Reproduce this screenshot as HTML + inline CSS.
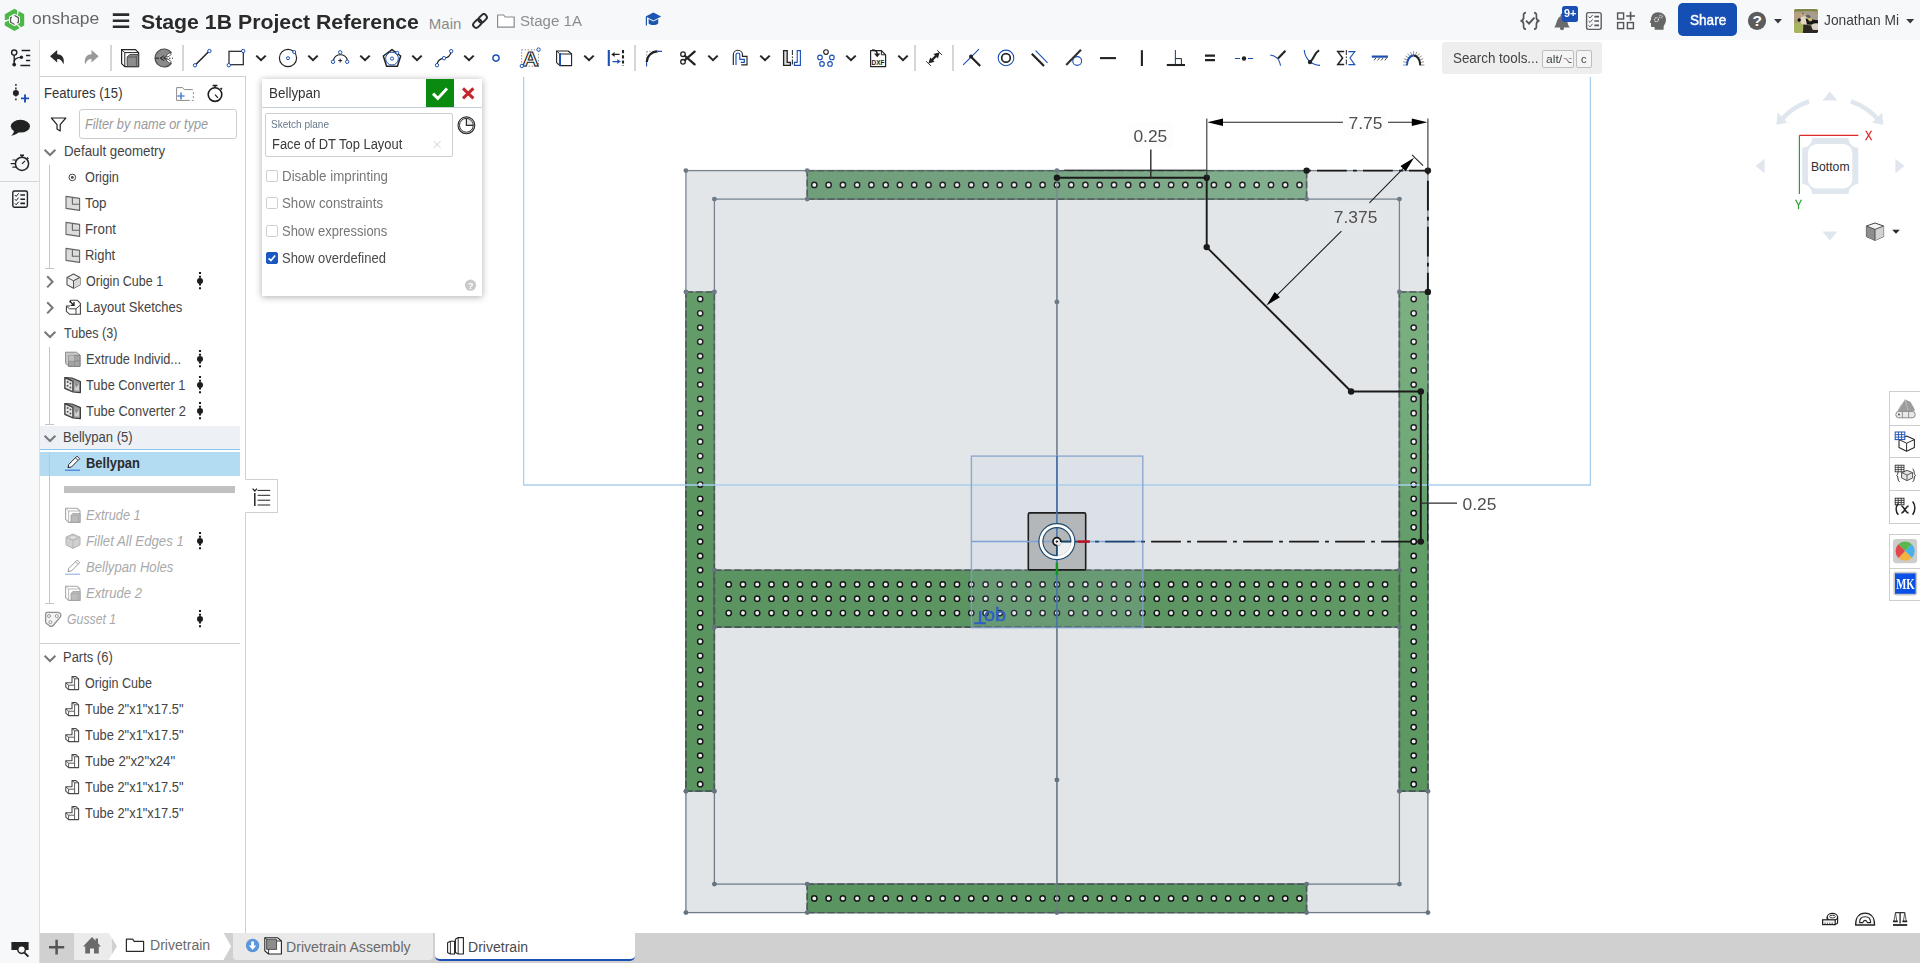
<!DOCTYPE html>
<html lang="en"><head><meta charset="utf-8"><title>Stage 1B Project Reference | Drivetrain</title>
<style>
*{box-sizing:border-box}
html,body{margin:0;padding:0}
body{width:1920px;height:963px;overflow:hidden;position:relative;background:#fff;font-family:"Liberation Sans",sans-serif;}
.t{position:absolute;white-space:nowrap;line-height:1;transform-origin:0 50%;display:inline-block}
.ic,.cv{position:absolute;overflow:visible;display:block}
.cv{left:0;top:0;will-change:transform}
#header{position:absolute;left:0;top:0;width:1920px;height:40px;background:#f7f8fa}
#sidebar{position:absolute;left:0;top:40px;width:40px;height:923px;background:#f7f8fa;border-right:1px solid #dcdcdc}
#sidebar .hr{position:absolute;left:0;top:141px;width:39px;height:1px;background:#d6d6d6}
#toolbar{position:absolute;left:40px;top:40px;width:1880px;height:37px;background:#fff}
.tsep{position:absolute;top:45px;width:1.6px;height:25.5px;background:#d6d6d6}
#search{position:absolute;left:1442.3px;top:41.9px;width:159.6px;height:31.8px;background:#eeeeee;border-radius:3px}
.key{position:absolute;top:50.3px;height:18.2px;background:#f5f5f5;border:1px solid #bdbdbd;border-bottom-width:1.6px;border-radius:2px}
#features{position:absolute;left:40px;top:76px;width:206px;height:857px;background:#fff;border-top:1px solid #cfcfcf;border-right:1px solid #cfcfcf}
#filter{position:absolute;left:79px;top:109px;width:158px;height:30px;border:1px solid #cdcdcd;border-radius:3px;background:#fff}
.row{position:absolute;left:40px;width:200px;height:24px}
.guide{position:absolute;width:1px;background:#c4c4c4}
.gtick{position:absolute;height:1px;background:#c4c4c4}
#rollbar{position:absolute;left:64.1px;top:486.1px;width:171px;height:6.8px;background:#c1c1c1}
#ftab{position:absolute;left:245px;top:479.2px;width:33.2px;height:33.6px;background:#fff;border:1px solid #cfcfcf;border-left:1px solid #fff}
#dialog{position:absolute;left:262px;top:79px;width:220px;height:217px;background:#fff;box-shadow:0 1px 7px rgba(0,0,0,0.33)}
#dialog .hd{position:absolute;left:0;top:0;width:220px;height:28.6px;border-bottom:1px solid #c4cfd8}
#ok{position:absolute;left:426px;top:79px;width:28px;height:28.2px;background:#0b8a10}
#plane{position:absolute;left:265px;top:113px;width:188px;height:44px;border:1px solid #cfcfcf;border-radius:2px;background:#fff}
.cb{position:absolute;left:266px;width:12px;height:12px;border:1px solid #cfcfcf;border-radius:2px;background:#fff}
.cb.on{background:#1a56c4;border-color:#1a56c4}
#tabs{position:absolute;left:40px;top:932.5px;width:1880px;height:30.5px;background:#d0d0d0}
#home{position:absolute;left:73.9px;top:932.5px;width:38px;height:27.4px;background:#ebebeb}
#asm{position:absolute;left:232.8px;top:932.5px;width:200.4px;height:27.2px;background:#e9e9e9;border-radius:0 0 4px 4px}
#active{position:absolute;left:434.8px;top:932.5px;width:200.4px;height:28.6px;background:#fff;border-bottom:2px solid #1a4fb4;border-radius:0 0 5px 5px}
#share{position:absolute;left:1678px;top:2.9px;width:59px;height:32.9px;background:#164fb3;border-radius:5px}
#badge{position:absolute;left:1561.9px;top:6px;width:16.2px;height:15.8px;background:#1a4fb4;border-radius:2.5px}
#avatar{position:absolute;left:1793px;top:7.9px;width:26px;height:26px;border-radius:3px;background:#fff}
.rp{position:absolute;left:1888.5px;width:32px;background:#fff;border:1px solid #cdcdcd;border-right:none}
.rp i{position:absolute;left:0;width:31px;height:1px;background:#cdcdcd}
</style></head><body>
<main id="canvas">
<svg class="cv" width="1920" height="963" viewBox="0 0 1920 963">
<defs>
<circle id="h" r="2.65" fill="#eceef2" stroke="#141414" stroke-width="1.45"/>
<circle id="gp" r="2.45" fill="#65737f"/>
<circle id="bp" r="3.2" fill="#1a1a1a"/>
<linearGradient id="gt" x1="0" y1="0" x2="1" y2="0"><stop offset="0" stop-color="#679972"/><stop offset="0.5" stop-color="#6f9f7c"/><stop offset="1" stop-color="#7dac89"/></linearGradient>
<linearGradient id="gr" x1="0" y1="0" x2="0" y2="1"><stop offset="0" stop-color="#74ac7a"/><stop offset="0.38" stop-color="#67a26e"/><stop offset="0.6" stop-color="#5f9b65"/><stop offset="1" stop-color="#5c9762"/></linearGradient>
<linearGradient id="gm" x1="0" y1="0" x2="1" y2="0"><stop offset="0" stop-color="#5b9461"/><stop offset="0.6" stop-color="#5c9562"/><stop offset="1" stop-color="#609964"/></linearGradient>
</defs>
<rect x="685.9" y="170.6" width="742.0" height="742.0" fill="#e2e5e8" stroke="#6f7c88" stroke-width="1.3"/>
<rect x="714.4" y="199.1" width="685.0" height="685.0" fill="#e2e5e8" stroke="#6f7c88" stroke-width="1.3"/>
<line x1="1056.9" y1="170.6" x2="1056.9" y2="912.6" stroke="#6f7c88" stroke-width="1.4"/>
<rect x="807.2" y="170.6" width="499.4" height="28.5" fill="url(#gt)"/>
<rect x="807.2" y="170.6" width="499.4" height="28.5" fill="none" stroke="#222b2c" stroke-width="1.4" stroke-dasharray="7 3"/>
<rect x="807.2" y="170.6" width="499.4" height="28.5" fill="none" stroke="#566b66" stroke-width="1.4" stroke-opacity="0.75"/>
<rect x="807.2" y="884.1" width="499.4" height="28.5" fill="#5a9460"/>
<rect x="807.2" y="884.1" width="499.4" height="28.5" fill="none" stroke="#222b2c" stroke-width="1.4" stroke-dasharray="7 3"/>
<rect x="807.2" y="884.1" width="499.4" height="28.5" fill="none" stroke="#566b66" stroke-width="1.4" stroke-opacity="0.75"/>
<rect x="685.9" y="291.9" width="28.5" height="499.4" fill="#5a9560"/>
<rect x="685.9" y="291.9" width="28.5" height="499.4" fill="none" stroke="#222b2c" stroke-width="1.4" stroke-dasharray="7 3"/>
<rect x="685.9" y="291.9" width="28.5" height="499.4" fill="none" stroke="#566b66" stroke-width="1.4" stroke-opacity="0.75"/>
<rect x="1399.4" y="291.9" width="28.5" height="499.4" fill="url(#gr)"/>
<rect x="1399.4" y="291.9" width="28.5" height="499.4" fill="none" stroke="#222b2c" stroke-width="1.4" stroke-dasharray="7 3"/>
<rect x="1399.4" y="291.9" width="28.5" height="499.4" fill="none" stroke="#566b66" stroke-width="1.4" stroke-opacity="0.75"/>
<rect x="714.4" y="570.1" width="685.0" height="57.1" fill="url(#gm)"/>
<rect x="714.4" y="570.1" width="685.0" height="57.1" fill="none" stroke="#222b2c" stroke-width="1.4" stroke-dasharray="7 3"/>
<rect x="714.4" y="570.1" width="685.0" height="57.1" fill="none" stroke="#566b66" stroke-width="1.4" stroke-opacity="0.75"/>
<g><use href="#h" x="814.3" y="184.9"/><use href="#h" x="828.6" y="184.9"/><use href="#h" x="842.9" y="184.9"/><use href="#h" x="857.1" y="184.9"/><use href="#h" x="871.4" y="184.9"/><use href="#h" x="885.7" y="184.9"/><use href="#h" x="899.9" y="184.9"/><use href="#h" x="914.2" y="184.9"/><use href="#h" x="928.5" y="184.9"/><use href="#h" x="942.7" y="184.9"/><use href="#h" x="957.0" y="184.9"/><use href="#h" x="971.3" y="184.9"/><use href="#h" x="985.6" y="184.9"/><use href="#h" x="999.8" y="184.9"/><use href="#h" x="1014.1" y="184.9"/><use href="#h" x="1028.4" y="184.9"/><use href="#h" x="1042.6" y="184.9"/><use href="#h" x="1056.9" y="184.9"/><use href="#h" x="1071.2" y="184.9"/><use href="#h" x="1085.4" y="184.9"/><use href="#h" x="1099.7" y="184.9"/><use href="#h" x="1114.0" y="184.9"/><use href="#h" x="1128.2" y="184.9"/><use href="#h" x="1142.5" y="184.9"/><use href="#h" x="1156.8" y="184.9"/><use href="#h" x="1171.1" y="184.9"/><use href="#h" x="1185.3" y="184.9"/><use href="#h" x="1199.6" y="184.9"/><use href="#h" x="1213.9" y="184.9"/><use href="#h" x="1228.1" y="184.9"/><use href="#h" x="1242.4" y="184.9"/><use href="#h" x="1256.7" y="184.9"/><use href="#h" x="1271.0" y="184.9"/><use href="#h" x="1285.2" y="184.9"/><use href="#h" x="1299.5" y="184.9"/></g>
<g><use href="#h" x="814.3" y="898.4"/><use href="#h" x="828.6" y="898.4"/><use href="#h" x="842.9" y="898.4"/><use href="#h" x="857.1" y="898.4"/><use href="#h" x="871.4" y="898.4"/><use href="#h" x="885.7" y="898.4"/><use href="#h" x="899.9" y="898.4"/><use href="#h" x="914.2" y="898.4"/><use href="#h" x="928.5" y="898.4"/><use href="#h" x="942.7" y="898.4"/><use href="#h" x="957.0" y="898.4"/><use href="#h" x="971.3" y="898.4"/><use href="#h" x="985.6" y="898.4"/><use href="#h" x="999.8" y="898.4"/><use href="#h" x="1014.1" y="898.4"/><use href="#h" x="1028.4" y="898.4"/><use href="#h" x="1042.6" y="898.4"/><use href="#h" x="1056.9" y="898.4"/><use href="#h" x="1071.2" y="898.4"/><use href="#h" x="1085.4" y="898.4"/><use href="#h" x="1099.7" y="898.4"/><use href="#h" x="1114.0" y="898.4"/><use href="#h" x="1128.2" y="898.4"/><use href="#h" x="1142.5" y="898.4"/><use href="#h" x="1156.8" y="898.4"/><use href="#h" x="1171.1" y="898.4"/><use href="#h" x="1185.3" y="898.4"/><use href="#h" x="1199.6" y="898.4"/><use href="#h" x="1213.9" y="898.4"/><use href="#h" x="1228.1" y="898.4"/><use href="#h" x="1242.4" y="898.4"/><use href="#h" x="1256.7" y="898.4"/><use href="#h" x="1271.0" y="898.4"/><use href="#h" x="1285.2" y="898.4"/><use href="#h" x="1299.5" y="898.4"/></g>
<g><use href="#h" x="700.2" y="299.0"/><use href="#h" x="700.2" y="313.3"/><use href="#h" x="700.2" y="327.6"/><use href="#h" x="700.2" y="341.8"/><use href="#h" x="700.2" y="356.1"/><use href="#h" x="700.2" y="370.4"/><use href="#h" x="700.2" y="384.6"/><use href="#h" x="700.2" y="398.9"/><use href="#h" x="700.2" y="413.2"/><use href="#h" x="700.2" y="427.4"/><use href="#h" x="700.2" y="441.7"/><use href="#h" x="700.2" y="456.0"/><use href="#h" x="700.2" y="470.2"/><use href="#h" x="700.2" y="484.5"/><use href="#h" x="700.2" y="498.8"/><use href="#h" x="700.2" y="513.1"/><use href="#h" x="700.2" y="527.3"/><use href="#h" x="700.2" y="541.6"/><use href="#h" x="700.2" y="555.9"/><use href="#h" x="700.2" y="570.1"/><use href="#h" x="700.2" y="584.4"/><use href="#h" x="700.2" y="598.7"/><use href="#h" x="700.2" y="613.0"/><use href="#h" x="700.2" y="627.2"/><use href="#h" x="700.2" y="641.5"/><use href="#h" x="700.2" y="655.8"/><use href="#h" x="700.2" y="670.0"/><use href="#h" x="700.2" y="684.3"/><use href="#h" x="700.2" y="698.6"/><use href="#h" x="700.2" y="712.8"/><use href="#h" x="700.2" y="727.1"/><use href="#h" x="700.2" y="741.4"/><use href="#h" x="700.2" y="755.6"/><use href="#h" x="700.2" y="769.9"/><use href="#h" x="700.2" y="784.2"/></g>
<g><use href="#h" x="1413.7" y="299.0"/><use href="#h" x="1413.7" y="313.3"/><use href="#h" x="1413.7" y="327.6"/><use href="#h" x="1413.7" y="341.8"/><use href="#h" x="1413.7" y="356.1"/><use href="#h" x="1413.7" y="370.4"/><use href="#h" x="1413.7" y="384.6"/><use href="#h" x="1413.7" y="398.9"/><use href="#h" x="1413.7" y="413.2"/><use href="#h" x="1413.7" y="427.4"/><use href="#h" x="1413.7" y="441.7"/><use href="#h" x="1413.7" y="456.0"/><use href="#h" x="1413.7" y="470.2"/><use href="#h" x="1413.7" y="484.5"/><use href="#h" x="1413.7" y="498.8"/><use href="#h" x="1413.7" y="513.1"/><use href="#h" x="1413.7" y="527.3"/><use href="#h" x="1413.7" y="541.6"/><use href="#h" x="1413.7" y="555.9"/><use href="#h" x="1413.7" y="570.1"/><use href="#h" x="1413.7" y="584.4"/><use href="#h" x="1413.7" y="598.7"/><use href="#h" x="1413.7" y="613.0"/><use href="#h" x="1413.7" y="627.2"/><use href="#h" x="1413.7" y="641.5"/><use href="#h" x="1413.7" y="655.8"/><use href="#h" x="1413.7" y="670.0"/><use href="#h" x="1413.7" y="684.3"/><use href="#h" x="1413.7" y="698.6"/><use href="#h" x="1413.7" y="712.8"/><use href="#h" x="1413.7" y="727.1"/><use href="#h" x="1413.7" y="741.4"/><use href="#h" x="1413.7" y="755.6"/><use href="#h" x="1413.7" y="769.9"/><use href="#h" x="1413.7" y="784.2"/></g>
<g><use href="#h" x="728.7" y="584.4"/><use href="#h" x="743.0" y="584.4"/><use href="#h" x="757.2" y="584.4"/><use href="#h" x="771.5" y="584.4"/><use href="#h" x="785.8" y="584.4"/><use href="#h" x="800.0" y="584.4"/><use href="#h" x="814.3" y="584.4"/><use href="#h" x="828.6" y="584.4"/><use href="#h" x="842.9" y="584.4"/><use href="#h" x="857.1" y="584.4"/><use href="#h" x="871.4" y="584.4"/><use href="#h" x="885.7" y="584.4"/><use href="#h" x="899.9" y="584.4"/><use href="#h" x="914.2" y="584.4"/><use href="#h" x="928.5" y="584.4"/><use href="#h" x="942.7" y="584.4"/><use href="#h" x="957.0" y="584.4"/><use href="#h" x="971.3" y="584.4"/><use href="#h" x="985.6" y="584.4"/><use href="#h" x="999.8" y="584.4"/><use href="#h" x="1014.1" y="584.4"/><use href="#h" x="1028.4" y="584.4"/><use href="#h" x="1042.6" y="584.4"/><use href="#h" x="1056.9" y="584.4"/><use href="#h" x="1071.2" y="584.4"/><use href="#h" x="1085.4" y="584.4"/><use href="#h" x="1099.7" y="584.4"/><use href="#h" x="1114.0" y="584.4"/><use href="#h" x="1128.2" y="584.4"/><use href="#h" x="1142.5" y="584.4"/><use href="#h" x="1156.8" y="584.4"/><use href="#h" x="1171.1" y="584.4"/><use href="#h" x="1185.3" y="584.4"/><use href="#h" x="1199.6" y="584.4"/><use href="#h" x="1213.9" y="584.4"/><use href="#h" x="1228.1" y="584.4"/><use href="#h" x="1242.4" y="584.4"/><use href="#h" x="1256.7" y="584.4"/><use href="#h" x="1271.0" y="584.4"/><use href="#h" x="1285.2" y="584.4"/><use href="#h" x="1299.5" y="584.4"/><use href="#h" x="1313.8" y="584.4"/><use href="#h" x="1328.0" y="584.4"/><use href="#h" x="1342.3" y="584.4"/><use href="#h" x="1356.6" y="584.4"/><use href="#h" x="1370.8" y="584.4"/><use href="#h" x="1385.1" y="584.4"/><use href="#h" x="728.7" y="598.7"/><use href="#h" x="743.0" y="598.7"/><use href="#h" x="757.2" y="598.7"/><use href="#h" x="771.5" y="598.7"/><use href="#h" x="785.8" y="598.7"/><use href="#h" x="800.0" y="598.7"/><use href="#h" x="814.3" y="598.7"/><use href="#h" x="828.6" y="598.7"/><use href="#h" x="842.9" y="598.7"/><use href="#h" x="857.1" y="598.7"/><use href="#h" x="871.4" y="598.7"/><use href="#h" x="885.7" y="598.7"/><use href="#h" x="899.9" y="598.7"/><use href="#h" x="914.2" y="598.7"/><use href="#h" x="928.5" y="598.7"/><use href="#h" x="942.7" y="598.7"/><use href="#h" x="957.0" y="598.7"/><use href="#h" x="971.3" y="598.7"/><use href="#h" x="985.6" y="598.7"/><use href="#h" x="999.8" y="598.7"/><use href="#h" x="1014.1" y="598.7"/><use href="#h" x="1028.4" y="598.7"/><use href="#h" x="1042.6" y="598.7"/><use href="#h" x="1056.9" y="598.7"/><use href="#h" x="1071.2" y="598.7"/><use href="#h" x="1085.4" y="598.7"/><use href="#h" x="1099.7" y="598.7"/><use href="#h" x="1114.0" y="598.7"/><use href="#h" x="1128.2" y="598.7"/><use href="#h" x="1142.5" y="598.7"/><use href="#h" x="1156.8" y="598.7"/><use href="#h" x="1171.1" y="598.7"/><use href="#h" x="1185.3" y="598.7"/><use href="#h" x="1199.6" y="598.7"/><use href="#h" x="1213.9" y="598.7"/><use href="#h" x="1228.1" y="598.7"/><use href="#h" x="1242.4" y="598.7"/><use href="#h" x="1256.7" y="598.7"/><use href="#h" x="1271.0" y="598.7"/><use href="#h" x="1285.2" y="598.7"/><use href="#h" x="1299.5" y="598.7"/><use href="#h" x="1313.8" y="598.7"/><use href="#h" x="1328.0" y="598.7"/><use href="#h" x="1342.3" y="598.7"/><use href="#h" x="1356.6" y="598.7"/><use href="#h" x="1370.8" y="598.7"/><use href="#h" x="1385.1" y="598.7"/><use href="#h" x="728.7" y="613.0"/><use href="#h" x="743.0" y="613.0"/><use href="#h" x="757.2" y="613.0"/><use href="#h" x="771.5" y="613.0"/><use href="#h" x="785.8" y="613.0"/><use href="#h" x="800.0" y="613.0"/><use href="#h" x="814.3" y="613.0"/><use href="#h" x="828.6" y="613.0"/><use href="#h" x="842.9" y="613.0"/><use href="#h" x="857.1" y="613.0"/><use href="#h" x="871.4" y="613.0"/><use href="#h" x="885.7" y="613.0"/><use href="#h" x="899.9" y="613.0"/><use href="#h" x="914.2" y="613.0"/><use href="#h" x="928.5" y="613.0"/><use href="#h" x="942.7" y="613.0"/><use href="#h" x="957.0" y="613.0"/><use href="#h" x="971.3" y="613.0"/><use href="#h" x="985.6" y="613.0"/><use href="#h" x="999.8" y="613.0"/><use href="#h" x="1014.1" y="613.0"/><use href="#h" x="1028.4" y="613.0"/><use href="#h" x="1042.6" y="613.0"/><use href="#h" x="1056.9" y="613.0"/><use href="#h" x="1071.2" y="613.0"/><use href="#h" x="1085.4" y="613.0"/><use href="#h" x="1099.7" y="613.0"/><use href="#h" x="1114.0" y="613.0"/><use href="#h" x="1128.2" y="613.0"/><use href="#h" x="1142.5" y="613.0"/><use href="#h" x="1156.8" y="613.0"/><use href="#h" x="1171.1" y="613.0"/><use href="#h" x="1185.3" y="613.0"/><use href="#h" x="1199.6" y="613.0"/><use href="#h" x="1213.9" y="613.0"/><use href="#h" x="1228.1" y="613.0"/><use href="#h" x="1242.4" y="613.0"/><use href="#h" x="1256.7" y="613.0"/><use href="#h" x="1271.0" y="613.0"/><use href="#h" x="1285.2" y="613.0"/><use href="#h" x="1299.5" y="613.0"/><use href="#h" x="1313.8" y="613.0"/><use href="#h" x="1328.0" y="613.0"/><use href="#h" x="1342.3" y="613.0"/><use href="#h" x="1356.6" y="613.0"/><use href="#h" x="1370.8" y="613.0"/><use href="#h" x="1385.1" y="613.0"/></g>
<line x1="1056.9" y1="170.6" x2="1056.9" y2="912.6" stroke="#6f7c88" stroke-width="1.4" stroke-opacity="0.8"/>
<g><use href="#gp" x="685.9" y="170.6"/><use href="#gp" x="1427.9" y="912.6"/><use href="#gp" x="685.9" y="912.6"/><use href="#gp" x="714.4" y="199.1"/><use href="#gp" x="1399.4" y="199.1"/><use href="#gp" x="714.4" y="884.1"/><use href="#gp" x="1399.4" y="884.1"/><use href="#gp" x="807.2" y="170.6"/><use href="#gp" x="807.2" y="199.1"/><use href="#gp" x="1306.6" y="199.1"/><use href="#gp" x="807.2" y="884.1"/><use href="#gp" x="807.2" y="912.6"/><use href="#gp" x="1306.6" y="884.1"/><use href="#gp" x="1306.6" y="912.6"/><use href="#gp" x="685.9" y="291.9"/><use href="#gp" x="714.4" y="291.9"/><use href="#gp" x="685.9" y="791.3"/><use href="#gp" x="714.4" y="791.3"/><use href="#gp" x="1399.4" y="291.9"/><use href="#gp" x="1399.4" y="791.3"/><use href="#gp" x="1427.9" y="791.3"/><use href="#gp" x="1056.9" y="170.6"/><use href="#gp" x="1056.9" y="912.6"/><use href="#gp" x="1056.9" y="301.9"/><use href="#gp" x="1056.9" y="779.9"/><use href="#gp" x="714.4" y="570.1"/><use href="#gp" x="714.4" y="627.2"/><use href="#gp" x="1399.4" y="570.1"/><use href="#gp" x="1399.4" y="627.2"/></g>
<path d="M523.6 76 V485 H1590.4 V76" fill="#ffffff" fill-opacity="0.06" stroke="#a9d0ee" stroke-width="1.3"/>
<rect x="971.4" y="456.1" width="171.4" height="171.6" fill="#b9c8e6" fill-opacity="0.13"/>
<rect x="1028.3" y="512.9" width="57.4" height="57" fill="#b4b7ba" stroke="#1e1e1e" stroke-width="1.6" rx="1.5"/>
<rect x="971.4" y="456.1" width="171.4" height="171.6" fill="none" stroke="#7f9fcb" stroke-width="1.4" stroke-opacity="0.85"/>
<line x1="1056.9" y1="456.1" x2="1056.9" y2="627.7" stroke="#4272a8" stroke-width="1.5"/>
<line x1="971.4" y1="541.6" x2="1142.8" y2="541.6" stroke="#7da3d6" stroke-width="1.5"/>
<text x="974" y="610.5" font-family="Liberation Sans, sans-serif" font-size="18" fill="#2d5fc2" stroke="#2d5fc2" stroke-width="0.45" transform="translate(0,1221) scale(1,-1)" textLength="32" lengthAdjust="spacingAndGlyphs">Top</text>
<clipPath id="cpA"><rect x="1056" y="530" width="87.6" height="24"/></clipPath><clipPath id="cpB"><rect x="1143.6" y="530" width="300" height="24"/></clipPath>
<line x1="1056.9" y1="541.6" x2="1420.8" y2="541.6" stroke="#1f446f" stroke-width="1.9" stroke-dasharray="29.8 6.2 3.8 6.2" stroke-dashoffset="-2.2" clip-path="url(#cpA)"/>
<line x1="1056.9" y1="541.6" x2="1420.8" y2="541.6" stroke="#1a1a1a" stroke-width="1.9" stroke-dasharray="29.8 6.2 3.8 6.2" stroke-dashoffset="-2.2" clip-path="url(#cpB)"/>
<line x1="1306.6" y1="170.6" x2="1427.9" y2="170.6" stroke="#1a1a1a" stroke-width="1.9" stroke-dasharray="29.8 6.2 3.8 6.2" stroke-dashoffset="35.6"/>
<line x1="1427.9" y1="170.6" x2="1427.9" y2="291.9" stroke="#1a1a1a" stroke-width="1.9" stroke-dasharray="29.8 6.2 3.8 6.2" stroke-dashoffset="35.8"/>
<use href="#h" x="1413.7" y="541.6"/>
<path d="M1064 170.2 H1206.7 M1427.6 391.5 V541.6" stroke="#1e1e1e" stroke-width="1" fill="none"/>
<path d="M1056.9 177.7 L1206.7 177.7 L1206.7 247.1 L1351.1 391.5 L1420.8 391.5 L1420.8 541.6" fill="none" stroke="#1a1a1a" stroke-width="1.9" stroke-linejoin="round"/>
<g><use href="#bp" x="1056.9" y="177.7"/><use href="#bp" x="1206.7" y="177.7"/><use href="#bp" x="1206.7" y="247.1"/><use href="#bp" x="1351.1" y="391.5"/><use href="#bp" x="1420.8" y="391.5"/><use href="#bp" x="1420.8" y="541.6"/><use href="#bp" x="1306.6" y="170.6"/><use href="#bp" x="1427.9" y="170.6"/><use href="#bp" x="1427.9" y="291.9"/></g>
<g transform="translate(1056.9,541.6)">
<circle r="16" fill="none" stroke="#ffffff" stroke-width="3.6"/>
<path d="M0 0 H14 A14 14 0 0 1 0 14 Z" fill="#eef0f2"/>
<circle r="18" fill="none" stroke="#1d4a6d" stroke-width="1.1"/>
<path d="M0 14 A14 14 0 1 1 14 0 H0 Z" fill="none" stroke="#1d4a6d" stroke-width="1.1"/>
<path d="M0 0 V14 M0 0 H14" stroke="#1d4a6d" stroke-width="1.6"/>
<circle r="3.9" fill="#f4f4f4" stroke="#151515" stroke-width="1.7"/>
<circle r="1.2" fill="#151515"/>
<path d="M0.5 0.5 H4.5 A4 4 0 0 1 0.5 4.5 Z" fill="#e8e8e8"/>
<line x1="21" y1="0" x2="33" y2="0" stroke="#c8101c" stroke-width="2.4"/>
<line x1="0" y1="21" x2="0" y2="33.5" stroke="#0c9a18" stroke-width="2.4"/>
</g>
<path d="M1206.8 118.5 V177.7 M1427.9 118.5 V170.6" stroke="#333" stroke-width="1.1" fill="none"/>
<path d="M1222 122.3 H1343 M1388 122.3 H1413" stroke="#222" stroke-width="1.1"/>
<path d="M1207.3 122.3 L1223 118.6 V126 Z M1427.4 122.3 L1411.8 118.6 V126 Z" fill="#000"/>
<rect x="1343" y="110" width="44" height="25" fill="#fdfdfd"/>
<text x="1348.6" y="128.7" font-family="Liberation Sans, sans-serif" font-size="17.4" fill="#4f4f4f">7.75</text>
<rect x="1129" y="122" width="44" height="26" fill="#fdfdfd"/>
<text x="1133.4" y="141.7" font-family="Liberation Sans, sans-serif" font-size="17.4" fill="#4f4f4f">0.25</text>
<line x1="1150.8" y1="149.6" x2="1150.8" y2="177.7" stroke="#2a2a2a" stroke-width="1.4"/>
<text x="1462.6" y="509.7" font-family="Liberation Sans, sans-serif" font-size="17.4" fill="#4f4f4f">0.25</text>
<line x1="1420.8" y1="503.1" x2="1457" y2="503.1" stroke="#2a2a2a" stroke-width="1.2"/>
<rect x="1329" y="203" width="53" height="27" fill="#e4e7ea"/>
<text x="1333.8" y="222.9" font-family="Liberation Sans, sans-serif" font-size="17.4" fill="#4f4f4f">7.375</text>
<path d="M1405 166.7 L1369.4 202.8 M1341.4 231.2 L1275 297.2" stroke="#222" stroke-width="1.15" fill="none"/>
<path d="M1412 154.9 L1423.1 165.7" stroke="#222" stroke-width="1.1"/>
<path d="M1414 157.7 L1405.7 171.2 L1400.5 166 Z" fill="#000"/>
<path d="M1266.4 305.5 L1274.7 292 L1279.9 297.2 Z" fill="#000"/>
</svg>
</main>
<header id="header">
<svg class="ic" style="left:3px;top:7px" width="24" height="26" viewBox="3 7 24 26"><polygon points="17.41,10.38 14.50,8.70 4.80,14.30 4.80,20.35 9.04,19.27 9.04,16.75 14.50,13.60 16.79,14.92" fill="#4db748"/><polygon points="4.80,22.14 4.80,25.50 14.50,31.10 19.74,28.08 16.68,24.94 14.50,26.20 9.04,23.05 9.04,20.40" fill="#4db748"/><polygon points="21.29,27.18 24.20,25.50 24.20,14.30 18.96,11.28 17.77,15.49 19.96,16.75 19.96,23.05 17.66,24.37" fill="#4db748"/><polygon points="14.50,15.40 18.40,17.65 18.40,22.15 14.50,24.40 10.60,22.15 10.60,17.65" fill="none" stroke="#5a5a5a" stroke-width="1.2" stroke-dasharray="10.5 3"/></svg>
<svg class="ic" style="left:112px;top:12px" width="18" height="17" viewBox="112 12 18 17"><path d="M112.8 14.6 H129.2 M112.8 20.7 H129.2 M112.8 26.8 H129.2" stroke="#2b2b2b" stroke-width="2.6"/></svg>
<svg class="ic" style="left:472px;top:13px" width="17" height="17" viewBox="472 13 17 17"><g transform="rotate(-45 480 21)" fill="none" stroke="#2b2b2b" stroke-width="1.9"><rect x="471.6" y="18" width="9.4" height="6" rx="3"/><rect x="479" y="18" width="9.4" height="6" rx="3"/></g></svg>
<svg class="ic" style="left:496px;top:13px" width="20" height="16" viewBox="496 13 20 16"><path d="M497.6 27.2 V15 H503.6 L505.2 17 H514.2 V27.2 Z" fill="#fff" stroke="#8a8a8a" stroke-width="1.2" stroke-linejoin="round"/></svg>
<svg class="ic" style="left:644px;top:11px" width="19" height="17" viewBox="644 11 19 17"><path d="M653.4 12.4 L661.2 16.4 L653.4 20.4 L645.6 16.4 Z" fill="#1b56b0"/><path d="M648.6 19 V23.4 C651 25.6 655.8 25.6 658.2 23.4 V19 L653.4 21.6 Z" fill="#1b56b0"/><path d="M646.4 17 V25.6" stroke="#1b56b0" stroke-width="1.2"/></svg>
<svg class="ic" style="left:1519px;top:11px" width="23" height="20" viewBox="1519 11 23 20"><path d="M1526 12.6 C1523 12.6 1523.6 15.5 1523.6 17.5 C1523.6 19.6 1522.6 20.6 1520.6 20.9 C1522.6 21.2 1523.6 22.2 1523.6 24.3 C1523.6 26.3 1523 29.2 1526 29.2" fill="none" stroke="#555" stroke-width="1.7"/><path d="M1534 12.6 C1537 12.6 1536.4 15.5 1536.4 17.5 C1536.4 19.6 1537.4 20.6 1539.4 20.9 C1537.4 21.2 1536.4 22.2 1536.4 24.3 C1536.4 26.3 1537 29.2 1534 29.2" fill="none" stroke="#555" stroke-width="1.7"/><path d="M1526 20.6 L1529 23.6 L1534.4 17.6" fill="none" stroke="#555" stroke-width="1.9"/></svg>
<svg class="ic" style="left:1553px;top:12px" width="19" height="19" viewBox="1553 12 19 19"><path d="M1554.2 27.4 C1557 25 1556 17.4 1562 15.6 C1568 17.4 1567 25 1569.8 27.4 Z" fill="#6a6a6a"/><circle cx="1562" cy="28.2" r="2" fill="#6a6a6a"/><circle cx="1562" cy="15" r="1.5" fill="#6a6a6a"/></svg>
<svg class="ic" style="left:1585px;top:11px" width="18" height="20" viewBox="1585 11 18 20"><rect x="1586.6" y="12.6" width="14.6" height="16.8" rx="1.8" fill="none" stroke="#5e5e5e" stroke-width="1.4"/><path d="M1594.4 16.6 H1599 M1594.4 21 H1599 M1594.4 25.4 H1599" stroke="#555" stroke-width="1.6"/><path d="M1588.6 16.6 L1590 18 L1592.6 15 M1588.6 21 L1590 22.4 L1592.6 19.4 M1588.6 25.4 L1590 26.8 L1592.6 23.8" stroke="#555" stroke-width="1" fill="none"/></svg>
<svg class="ic" style="left:1616px;top:11px" width="20" height="20" viewBox="1616 11 20 20"><rect x="1617.6" y="13" width="6" height="6" fill="none" stroke="#555" stroke-width="1.4"/><rect x="1617.6" y="22.6" width="6" height="6" fill="none" stroke="#555" stroke-width="1.4"/><rect x="1627.4" y="22.6" width="6" height="6" fill="none" stroke="#555" stroke-width="1.4"/><path d="M1626.2 16 H1635 M1630.6 11.8 V20.4" stroke="#555" stroke-width="1.6"/></svg>
<svg class="ic" style="left:1649px;top:11px" width="19" height="20" viewBox="1649 11 19 20"><path d="M1658 12.2 C1662.8 12.2 1666 15.6 1666 19.8 C1666 23 1664.4 24.6 1663.6 26.2 V29.8 H1654.6 V27 H1652.2 C1651.4 27 1651 26.4 1651 25.4 V23 L1649.8 22.4 C1649.6 21.6 1651 20.2 1651 19.4 C1651 15.4 1653.6 12.2 1658 12.2 Z" fill="#666"/><circle cx="1656.4" cy="19.6" r="2" fill="none" stroke="#f2f2f2" stroke-width="1.1" stroke-dasharray="1 0.7"/><circle cx="1660.8" cy="16.6" r="1.5" fill="none" stroke="#f2f2f2" stroke-width="1" stroke-dasharray="0.9 0.6"/></svg>
<svg class="ic" style="left:1747px;top:11px" width="20" height="20" viewBox="1747 11 20 20"><circle cx="1757" cy="20.8" r="9.1" fill="#5c5c5c"/><text x="1752.4" y="26.4" font-family="Liberation Sans, sans-serif" font-weight="bold" font-size="15.5" fill="#fff">?</text></svg>
<svg class="ic" style="left:1773px;top:17px" width="10" height="8" viewBox="1773 17 10 8"><path d="M1774 19 H1782 L1778 23.4 Z" fill="#3a3a3a"/></svg>
<svg class="ic" style="left:1905px;top:17px" width="10" height="8" viewBox="1905 17 10 8"><path d="M1906.2 19 H1914.2 L1910.2 23.4 Z" fill="#3a3a3a"/></svg>
<span class="t" style="left:31.8px;top:10.0px;font-size:17px;color:#666;transform:scaleX(1.029);">onshape</span>
<span class="t" style="left:141.4px;top:11.1px;font-size:21px;color:#2a2a2a;font-weight:bold;transform:scaleX(1.013);">Stage 1B Project Reference</span>
<span class="t" style="left:428.8px;top:16.2px;font-size:15px;color:#8a8a8a;transform:scaleX(1.000);">Main</span>
<span class="t" style="left:520.3px;top:12.9px;font-size:15.4px;color:#8c8c8c;transform:scaleX(0.979);">Stage 1A</span>
<div id="badge"></div>
<span class="t" style="left:1564.2px;top:8.4px;font-size:10.5px;color:#fff;font-weight:bold;transform:scaleX(1.036);">9+</span>
<div id="share"></div>
<span class="t" style="left:1689.5px;top:12.1px;font-size:15px;color:#fff;transform:scaleX(0.904);-webkit-text-stroke:0.45px #fff;">Share</span>
<div id="avatar"></div>
<svg class="ic" style="left:1794px;top:8.9px" width="24" height="24" viewBox="1794 8.9 24 24"><defs><clipPath id="avc"><rect x="1794" y="8.9" width="24" height="24" rx="1.6"/></clipPath><filter id="avb" x="-10%" y="-10%" width="120%" height="120%"><feGaussianBlur stdDeviation="0.6"/></filter></defs><g clip-path="url(#avc)"><g filter="url(#avb)" transform="translate(1794,8.9)"><rect x="-2" y="-2" width="28" height="28" fill="#a79c72"/><rect x="-2" y="-2" width="28" height="4.4" fill="#7d8746"/><ellipse cx="4" cy="7" rx="5" ry="4" fill="#b7a084"/><ellipse cx="3.6" cy="19.5" rx="5.6" ry="6" fill="#a9b45e"/><ellipse cx="16" cy="7.4" rx="9" ry="5.2" fill="#a89c8c" transform="rotate(14 16 7.4)"/><ellipse cx="10.2" cy="11.4" rx="4" ry="4.2" fill="#e2d6c2"/><path d="M11.6 9.6 L25 11.4 V15.6 L13 15.4 Z" fill="#121212"/><ellipse cx="5.2" cy="11" rx="1.7" ry="1.7" fill="#0c0c0c"/><ellipse cx="8.6" cy="5.2" rx="2" ry="1.4" fill="#d9c679"/><ellipse cx="8.8" cy="4.8" rx="1.2" ry="0.8" fill="#4a4a50"/><path d="M11.4 7.6 L16 6 L18.4 11.8 L15.6 12.4 Z" fill="#d2ba6c"/><ellipse cx="14.4" cy="7.4" rx="2.4" ry="1.5" fill="#55606c" transform="rotate(18 14.4 7.4)"/><ellipse cx="22" cy="17.6" rx="4.6" ry="3.4" fill="#d9d0c6"/><path d="M9.4 15.4 L17 16.4 L20 25 H9 Z" fill="#2c2724"/><rect x="9" y="21" width="17" height="5" fill="#2a2521"/></g></g></svg>
<span class="t" style="left:1823.6px;top:12.1px;font-size:15px;color:#3e3e3e;transform:scaleX(0.917);">Jonathan Mi</span>
</header>
<nav id="toolbar"></nav>
<div id="tb-icons">
<svg class="ic" style="left:48px;top:48px" width="18" height="19" viewBox="48 48 18 19"><path d="M50 56.3 L57.2 50 V54.2 C62.5 54.2 65 58.5 63.4 64.6 C62.4 60.8 60.6 58.9 57.2 58.9 V62.6 Z" fill="#2a2a2a"/></svg>
<svg class="ic" style="left:83px;top:48px" width="18" height="19" viewBox="83 48 18 19"><path d="M50 56.3 L57.2 50 V54.2 C62.5 54.2 65 58.5 63.4 64.6 C62.4 60.8 60.6 58.9 57.2 58.9 V62.6 Z" fill="#9a9a9a" transform="translate(148.7,0) scale(-1,1)"/></svg>
<div class="tsep" style="left:110.2px"></div>
<svg class="ic" style="left:120px;top:48px" width="21" height="20" viewBox="120 48 21 20"><path d="M121.6 49.6 H135.5 L138.6 52.6 V66.6 H124.8 L121.6 63.6 Z" fill="#fff" stroke="#222" stroke-width="1.2" stroke-linejoin="round"/><path d="M121.6 49.6 L124.8 52.6 H138.6 M124.8 52.6 V66.6" fill="none" stroke="#222" stroke-width="1"/><path d="M127.2 57 L129.6 54.6 H138.6 V66.6 H127.2 Z" fill="#8d8d8d" stroke="#444" stroke-width="1"/><path d="M127.2 57 H136.4 V66.6 M136.4 57 L138.6 54.6" fill="none" stroke="#555" stroke-width="0.9"/></svg>
<svg class="ic" style="left:154px;top:48px" width="21" height="20" viewBox="154 48 21 20"><path d="M164 58 L171.3 52.6 A9 9 0 1 0 171.3 63.4 Z" fill="#8a8a8a" stroke="#4a4a4a" stroke-width="1.1" stroke-linejoin="round"/><ellipse cx="168.8" cy="54.9" rx="2.6" ry="1.3" transform="rotate(-36 168.8 54.9)" fill="#fff" stroke="#444" stroke-width="0.8"/><ellipse cx="168.8" cy="61.1" rx="2.6" ry="1.3" transform="rotate(36 168.8 61.1)" fill="#fff" stroke="#444" stroke-width="0.8"/><path d="M155 58.2 H173" stroke="#222" stroke-width="1" stroke-dasharray="4 1.5 1.5 1.5"/><path d="M160.5 58.2 L164 55.6 M160.5 58.2 L164 60.8" stroke="#222" stroke-width="1" fill="none"/></svg>
<div class="tsep" style="left:182.1px"></div>
<svg class="ic" style="left:192px;top:48px" width="21" height="20" viewBox="192 48 21 20"><line x1="195.3" y1="65" x2="209.3" y2="51" stroke="#222" stroke-width="1.5"/><circle cx="195" cy="65.3" r="1.7" fill="#fff" stroke="#1a4fb4" stroke-width="1.0"/><circle cx="209.4" cy="51" r="1.7" fill="#fff" stroke="#1a4fb4" stroke-width="1.0"/></svg>
<svg class="ic" style="left:225px;top:48px" width="21" height="20" viewBox="225 48 21 20"><rect x="229" y="51.3" width="14.3" height="13.4" fill="none" stroke="#222" stroke-width="1.2"/><circle cx="228.8" cy="65.2" r="1.7" fill="#fff" stroke="#1a4fb4" stroke-width="1.0"/><circle cx="243.2" cy="51" r="1.7" fill="#fff" stroke="#1a4fb4" stroke-width="1.0"/></svg>
<svg class="ic" style="left:254px;top:52.8px" width="14" height="10" viewBox="254 52.8 14 10"><polyline points="256.3,55.4 261,60.0 265.7,55.4" fill="none" stroke="#222" stroke-width="2"/></svg>
<svg class="ic" style="left:278px;top:48px" width="21" height="20" viewBox="278 48 21 20"><circle cx="288" cy="58" r="8.6" fill="none" stroke="#222" stroke-width="1.2"/><circle cx="288" cy="58.2" r="1.5" fill="#fff" stroke="#1a4fb4" stroke-width="1.0"/><circle cx="294.2" cy="52" r="1.5" fill="#fff" stroke="#1a4fb4" stroke-width="1.0"/></svg>
<svg class="ic" style="left:306px;top:52.8px" width="14" height="10" viewBox="306 52.8 14 10"><polyline points="308.3,55.4 313,60.0 317.7,55.4" fill="none" stroke="#222" stroke-width="2"/></svg>
<svg class="ic" style="left:330px;top:48px" width="21" height="20" viewBox="330 48 21 20"><path d="M333.4 60 A7.3 7.3 0 0 1 347.4 60" fill="none" stroke="#222" stroke-width="1.2"/><path d="M338.2 60.6 H342.2 M340.2 58.6 V62.6" stroke="#222" stroke-width="1"/><circle cx="333" cy="61.8" r="1.7" fill="#fff" stroke="#1a4fb4" stroke-width="1.0"/><circle cx="347.2" cy="61.8" r="1.7" fill="#fff" stroke="#1a4fb4" stroke-width="1.0"/><circle cx="340.2" cy="52.3" r="1.7" fill="#fff" stroke="#1a4fb4" stroke-width="1.0"/></svg>
<svg class="ic" style="left:358px;top:52.8px" width="14" height="10" viewBox="358 52.8 14 10"><polyline points="360.3,55.4 365,60.0 369.7,55.4" fill="none" stroke="#222" stroke-width="2"/></svg>
<svg class="ic" style="left:382px;top:48px" width="21" height="20" viewBox="382 48 21 20"><polygon points="392.0,49.6 400.7,56.0 397.4,66.2 386.6,66.2 383.3,56.0" fill="none" stroke="#222" stroke-width="1.5" stroke-linejoin="round"/><circle cx="392" cy="58.6" r="6.4" fill="none" stroke="#1a4fb4" stroke-width="1"/><circle cx="392" cy="58.6" r="1.6" fill="#fff" stroke="#1a4fb4" stroke-width="1.0"/><circle cx="397.3" cy="52.8" r="1.5" fill="#fff" stroke="#1a4fb4" stroke-width="1.0"/></svg>
<svg class="ic" style="left:409.9px;top:52.8px" width="14" height="10" viewBox="409.9 52.8 14 10"><polyline points="412.2,55.4 416.9,60.0 421.59999999999997,55.4" fill="none" stroke="#222" stroke-width="2"/></svg>
<svg class="ic" style="left:433px;top:48px" width="22" height="20" viewBox="433 48 22 20"><path d="M437 65 C437.5 60 440.5 58.6 444 58.2 C447.5 57.8 450.5 56 451.2 51.4" fill="none" stroke="#222" stroke-width="1.2"/><circle cx="437" cy="65.2" r="1.7" fill="#fff" stroke="#1a4fb4" stroke-width="1.0"/><circle cx="444" cy="58.2" r="1.7" fill="#fff" stroke="#1a4fb4" stroke-width="1.0"/><circle cx="451.2" cy="51.2" r="1.7" fill="#fff" stroke="#1a4fb4" stroke-width="1.0"/></svg>
<svg class="ic" style="left:461.8px;top:52.8px" width="14" height="10" viewBox="461.8 52.8 14 10"><polyline points="464.1,55.4 468.8,60.0 473.5,55.4" fill="none" stroke="#222" stroke-width="2"/></svg>
<svg class="ic" style="left:490px;top:52px" width="12" height="12" viewBox="490 52 12 12"><circle cx="496" cy="58.1" r="3.1" fill="none" stroke="#1a4fb4" stroke-width="1.4"/></svg>
<svg class="ic" style="left:519px;top:47px" width="23" height="22" viewBox="519 47 23 22"><rect x="521.6" y="49.8" width="17" height="16.4" fill="none" stroke="#777" stroke-width="0.8" stroke-dasharray="1.5 1.5"/><text x="522.2" y="65.6" font-family="Liberation Sans, sans-serif" font-size="20" font-weight="bold" fill="#fff" stroke="#222" stroke-width="1" textLength="16.5" lengthAdjust="spacingAndGlyphs">A</text><circle cx="521.8" cy="66" r="1.7" fill="#fff" stroke="#1a4fb4" stroke-width="1.0"/><circle cx="538.6" cy="49.6" r="1.7" fill="#fff" stroke="#1a4fb4" stroke-width="1.0"/></svg>
<svg class="ic" style="left:555px;top:49px" width="19" height="18" viewBox="555 49 19 18"><path d="M556.6 51 H568.2 L571.6 54 V65.6 H560 L556.6 62.6 Z" fill="#fff" stroke="#222" stroke-width="1.1" stroke-linejoin="round"/><path d="M556.6 51 L560 54 H571.6" fill="none" stroke="#222" stroke-width="1"/><path d="M560 53 V65.6" stroke="#1a4fb4" stroke-width="2"/></svg>
<svg class="ic" style="left:582px;top:52.8px" width="14" height="10" viewBox="582 52.8 14 10"><polyline points="584.3,55.4 589,60.0 593.7,55.4" fill="none" stroke="#222" stroke-width="2"/></svg>
<svg class="ic" style="left:606px;top:49px" width="20" height="18" viewBox="606 49 20 18"><path d="M608.8 50 V66" stroke="#1a4fb4" stroke-width="2.1"/><path d="M623 50 V66" stroke="#222" stroke-width="2.1" stroke-dasharray="3.2 2"/><path d="M619.5 54.4 H612.5 M614.8 52.6 L612.2 54.4 L614.8 56.2" stroke="#222" stroke-width="1.1" fill="none"/><path d="M612.5 61.6 H619.5 M617.2 59.8 L619.8 61.6 L617.2 63.4" stroke="#1a4fb4" stroke-width="1.1" fill="none"/></svg>
<div class="tsep" style="left:634.2px"></div>
<svg class="ic" style="left:644px;top:49px" width="20" height="19" viewBox="644 49 20 19"><path d="M646.6 51.4 H657.4 M646.6 51.4 V62" stroke="#888" stroke-width="0.8" stroke-dasharray="1.4 1.4" fill="none"/><path d="M646.8 62 A10.8 10.8 0 0 1 657.6 51.4" fill="none" stroke="#222" stroke-width="2.1"/><path d="M646.6 62 V66.6 M657.6 51.4 H662" stroke="#1a4fb4" stroke-width="1.1"/></svg>
<svg class="ic" style="left:678px;top:49px" width="19" height="18" viewBox="678 49 19 18"><path d="M685 56 L694.6 64.4 M685 60 L694.6 51.6" stroke="#222" stroke-width="2.3" stroke-linecap="round"/><circle cx="683" cy="54.2" r="2.3" fill="none" stroke="#222" stroke-width="1.3"/><circle cx="683" cy="61.8" r="2.3" fill="none" stroke="#222" stroke-width="1.3"/></svg>
<svg class="ic" style="left:705.8px;top:52.8px" width="14" height="10" viewBox="705.8 52.8 14 10"><polyline points="708.0999999999999,55.4 712.8,60.0 717.5,55.4" fill="none" stroke="#222" stroke-width="2"/></svg>
<svg class="ic" style="left:731px;top:49px" width="18" height="18" viewBox="731 49 18 18"><path d="M733.3 65 V54.9 A4.6 4.6 0 0 1 742.5 54.9 V56.3 H747 V64.8 H741.2" fill="none" stroke="#222" stroke-width="1.15"/><path d="M736 65 V54.9 A1.9 1.9 0 0 1 739.8 54.9 V59.3 H744.3 V62.4 H740.8" fill="none" stroke="#1a4fb4" stroke-width="1.15"/></svg>
<svg class="ic" style="left:758px;top:52.8px" width="14" height="10" viewBox="758 52.8 14 10"><polyline points="760.3,55.4 765,60.0 769.7,55.4" fill="none" stroke="#222" stroke-width="2"/></svg>
<svg class="ic" style="left:782px;top:49px" width="20" height="18" viewBox="782 49 20 18"><path d="M783.6 50.6 H787.2 V62.4 H790.4 V65.4 H783.6 Z" fill="#ddd" stroke="#222" stroke-width="1.3"/><path d="M792.4 50 V66" stroke="#222" stroke-width="1" stroke-dasharray="5 1.5 1.5 1.5"/><path d="M800.4 50.6 H797.2 V62.4 H794.4 V65.4 H800.4 Z" fill="none" stroke="#1a4fb4" stroke-width="1.1"/></svg>
<svg class="ic" style="left:816px;top:48px" width="20" height="20" viewBox="816 48 20 20"><circle cx="826" cy="52.1" r="2.3" fill="none" stroke="#222" stroke-width="1.1"/><circle cx="820" cy="57.4" r="2.3" fill="none" stroke="#1a4fb4" stroke-width="1.1"/><circle cx="831.9" cy="57.4" r="2.3" fill="none" stroke="#1a4fb4" stroke-width="1.1"/><circle cx="822" cy="63.9" r="2.3" fill="none" stroke="#1a4fb4" stroke-width="1.1"/><circle cx="830" cy="63.9" r="2.3" fill="none" stroke="#1a4fb4" stroke-width="1.1"/></svg>
<svg class="ic" style="left:843.9px;top:52.8px" width="14" height="10" viewBox="843.9 52.8 14 10"><polyline points="846.1999999999999,55.4 850.9,60.0 855.6,55.4" fill="none" stroke="#222" stroke-width="2"/></svg>
<svg class="ic" style="left:869px;top:48px" width="18" height="20" viewBox="869 48 18 20"><path d="M870.6 50.6 H881.4 L885.6 54.8 V66.6 H870.6 Z" fill="#fff" stroke="#222" stroke-width="1.2" stroke-linejoin="round"/><path d="M881.4 50.6 V54.8 H885.6" fill="none" stroke="#222" stroke-width="1"/><path d="M872 50 C875 50 877.2 51 877.2 54" fill="none" stroke="#222" stroke-width="1.6"/><path d="M874 53.6 H880.4 L877.2 57.2 Z" fill="#222"/><text x="871.6" y="65.2" font-family="Liberation Sans, sans-serif" font-size="6.6" font-weight="bold" fill="#222" textLength="13" lengthAdjust="spacingAndGlyphs">DXF</text></svg>
<svg class="ic" style="left:895.9px;top:52.8px" width="14" height="10" viewBox="895.9 52.8 14 10"><polyline points="898.1999999999999,55.4 902.9,60.0 907.6,55.4" fill="none" stroke="#222" stroke-width="2"/></svg>
<div class="tsep" style="left:914.2px"></div>
<svg class="ic" style="left:925px;top:49px" width="18" height="18" viewBox="925 49 18 18"><path d="M931.4 60.6 L936.7 55.3" stroke="#222" stroke-width="2.2"/><path d="M928.4 63.6 L930.2 57.4 L934.6 61.8 Z M939.7 52.3 L937.9 58.5 L933.5 54.1 Z" fill="#222"/><path d="M926 61.2 L931 66 M937.2 50.2 L942 55" stroke="#222" stroke-width="0.9"/></svg>
<div class="tsep" style="left:952.0px"></div>
<svg class="ic" style="left:962px;top:48px" width="20" height="20" viewBox="962 48 20 20"><path d="M963.2 64.8 L979 49.2" stroke="#1a4fb4" stroke-width="1.1"/><path d="M971 56.8 L980.2 66" stroke="#222" stroke-width="2.2"/><circle cx="971" cy="56.6" r="2" fill="#222"/></svg>
<svg class="ic" style="left:996px;top:48px" width="20" height="20" viewBox="996 48 20 20"><circle cx="1006" cy="57.9" r="7.8" fill="none" stroke="#1a4fb4" stroke-width="1.1"/><circle cx="1006" cy="57.9" r="4.3" fill="none" stroke="#222" stroke-width="1.7"/></svg>
<svg class="ic" style="left:1030px;top:48px" width="20" height="20" viewBox="1030 48 20 20"><path d="M1031.8 53.8 L1044 66" stroke="#222" stroke-width="2.2"/><path d="M1035.6 50.6 L1047.6 62.8" stroke="#1a4fb4" stroke-width="1.1"/></svg>
<svg class="ic" style="left:1064px;top:48px" width="20" height="20" viewBox="1064 48 20 20"><circle cx="1077.2" cy="61" r="4.4" fill="none" stroke="#1a4fb4" stroke-width="1.1"/><path d="M1066.2 65 L1081 49.8" stroke="#333" stroke-width="2.2"/></svg>
<svg class="ic" style="left:1098px;top:48px" width="20" height="20" viewBox="1098 48 20 20"><path d="M1100 58.1 H1116" stroke="#222" stroke-width="2.1"/></svg>
<svg class="ic" style="left:1132px;top:48px" width="20" height="20" viewBox="1132 48 20 20"><path d="M1141.9 50.2 V66" stroke="#222" stroke-width="2.1"/></svg>
<svg class="ic" style="left:1165px;top:48px" width="22" height="20" viewBox="1165 48 22 20"><path d="M1166.8 65 H1185" stroke="#222" stroke-width="2.1"/><path d="M1175.4 50 V64" stroke="#1a4fb4" stroke-width="1.1"/><path d="M1175.4 58.6 H1181.4 V64" stroke="#222" stroke-width="1" fill="none"/></svg>
<svg class="ic" style="left:1203px;top:48px" width="14" height="20" viewBox="1203 48 14 20"><path d="M1205 55.6 H1215 M1205 60.1 H1215" stroke="#222" stroke-width="2.1"/></svg>
<svg class="ic" style="left:1234px;top:48px" width="20" height="20" viewBox="1234 48 20 20"><path d="M1235 58.5 H1240 M1248 58.5 H1253" stroke="#1a4fb4" stroke-width="1.1"/><circle cx="1244" cy="58.5" r="2.2" fill="#222"/></svg>
<svg class="ic" style="left:1268px;top:48px" width="20" height="20" viewBox="1268 48 20 20"><path d="M1270.2 55 C1275.5 55.6 1279.5 59.5 1280.6 65.6" fill="none" stroke="#1a4fb4" stroke-width="1.1"/><path d="M1278 58.4 L1285.4 50.8" stroke="#222" stroke-width="2.1"/></svg>
<svg class="ic" style="left:1302px;top:48px" width="20" height="20" viewBox="1302 48 20 20"><path d="M1304.2 50 C1305 58 1310.5 65 1320 65.4" fill="none" stroke="#1a4fb4" stroke-width="1.1"/><path d="M1310 62.2 C1314.5 58 1314.5 52.5 1319.2 50.4" fill="none" stroke="#222" stroke-width="2"/><circle cx="1310" cy="62.2" r="2.1" fill="#222"/></svg>
<svg class="ic" style="left:1336px;top:49px" width="21" height="18" viewBox="1336 49 21 18"><path d="M1344.2 51.6 H1337.8 L1342.6 58 L1337.8 64.6 H1344.2" fill="none" stroke="#222" stroke-width="1.5"/><path d="M1346.3 50 V66" stroke="#222" stroke-width="1" stroke-dasharray="5 1.5 1.5 1.5"/><path d="M1348.4 51.6 H1354.8 L1350 58 L1354.8 64.6 H1348.4" fill="none" stroke="#1a4fb4" stroke-width="1.1"/></svg>
<svg class="ic" style="left:1370px;top:50px" width="20" height="14" viewBox="1370 50 20 14"><path d="M1371.8 56.6 H1388" stroke="#1a4fb4" stroke-width="2.2"/><path d="M1374 60.4 L1376 57.8 M1377.6 60.4 L1379.6 57.8 M1381.2 60.4 L1383.2 57.8 M1384.8 60.4 L1386.8 57.8" stroke="#333" stroke-width="0.9"/></svg>
<svg class="ic" style="left:1404px;top:48px" width="20" height="20" viewBox="1404 48 20 20"><path d="M1407.0 65.0 L1402.8 65.0 M1407.2 62.5 L1403.1 61.8 M1407.9 60.2 L1404.0 58.7 M1408.9 58.2 L1405.5 55.8 M1410.3 56.7 L1407.6 53.5 M1411.9 55.7 L1410.4 51.8 M1413.6 55.4 L1413.6 51.2 M1415.3 55.7 L1416.8 51.8 M1416.9 56.7 L1419.6 53.5 M1418.3 58.2 L1421.7 55.8 M1419.3 60.2 L1423.2 58.7 M1420.0 62.5 L1424.1 61.8 M1420.2 65.0 L1424.4 65.0 " stroke="#777" stroke-width="0.8"/><path d="M1407 65.4 A6.6 9.6 0 0 1 1413.6 55.4" fill="none" stroke="#1a4fb4" stroke-width="2"/><path d="M1413.6 55.4 A6.6 9.6 0 0 1 1420.2 65.4" fill="none" stroke="#222" stroke-width="2"/></svg>
<div id="search"></div>
<span class="t" style="left:1452.5px;top:50.1px;font-size:15px;color:#444;transform:scaleX(0.892);">Search tools...</span>
<div class="key" style="left:1542.3px;width:32.2px"></div><div class="key" style="left:1575.6px;width:16.4px"></div>
<span class="t" style="left:1546.2px;top:53.7px;font-size:11.5px;color:#444;transform:scaleX(1.056);">alt/</span>
<span class="t" style="left:1563.4px;top:56.5px;font-size:7.5px;color:#444;transform:scaleX(1.000);">⌥</span>
<span class="t" style="left:1581.0px;top:53.7px;font-size:11.5px;color:#444;transform:scaleX(0.974);">c</span>
</div>
<aside id="sidebar"><div class="hr"></div></aside>
<svg class="ic" style="left:9px;top:48px" width="23" height="20" viewBox="9 48 23 20"><circle cx="14.2" cy="52.6" r="2.6" fill="none" stroke="#222" stroke-width="1.4"/><path d="M14.2 55.2 V64" stroke="#222" stroke-width="1.4"/><circle cx="14.2" cy="64.6" r="1.9" fill="#222"/><path d="M14.2 62 C14.2 58.5 17 57.6 21 57.4" fill="none" stroke="#222" stroke-width="1.3"/><circle cx="21.4" cy="57.3" r="1.7" fill="#222"/><path d="M21.6 50.6 H30.2 M26 55.6 H30.2 M26 60.4 H30.2 M20.4 65.4 H30.2" stroke="#222" stroke-width="1.5"/></svg>
<svg class="ic" style="left:9px;top:83px" width="23" height="20" viewBox="9 83 23 20"><path d="M15.9 84 V102" stroke="#222" stroke-width="1.5" stroke-dasharray="1.8 1.8"/><circle cx="15.9" cy="92.9" r="3" fill="#222"/><path d="M21 98.4 H29 M25 94.4 V102.4" stroke="#1a4fb4" stroke-width="1.9"/></svg>
<svg class="ic" style="left:9px;top:118px" width="23" height="20" viewBox="9 118 23 20"><ellipse cx="20.4" cy="126.2" rx="9.6" ry="6.4" fill="#222"/><path d="M14 130 C14 133 12.8 134.4 11 135.8 C15.6 135 18 133.4 19.4 131.6 Z" fill="#222"/></svg>
<svg class="ic" style="left:9px;top:153px" width="23" height="21" viewBox="9 153 23 21"><circle cx="22" cy="163.8" r="6.6" fill="none" stroke="#222" stroke-width="1.5"/><path d="M20 155.2 H24 M22 155.2 V157.2 M27 157.6 L28.4 159" stroke="#222" stroke-width="1.4"/><path d="M22 163.8 L25 160.8" stroke="#222" stroke-width="1.2"/><path d="M12.4 160 H16 M10.6 163.6 H15 M12.4 167.2 H16" stroke="#222" stroke-width="1.2"/></svg>
<svg class="ic" style="left:11px;top:189px" width="19" height="20" viewBox="11 189 19 20"><rect x="12.8" y="191" width="14.6" height="16.2" rx="1.6" fill="none" stroke="#222" stroke-width="1.4"/><path d="M20.4 195 H25 M20.4 199.2 H25 M20.4 203.4 H25" stroke="#222" stroke-width="1.6"/><path d="M14.8 195 L16.2 196.4 L18.6 193.4 M14.8 199.2 L16.2 200.6 L18.6 197.6 M14.8 203.4 L16.2 204.8 L18.6 201.8" stroke="#222" stroke-width="1" fill="none"/></svg>
<svg class="ic" style="left:9px;top:940px" width="23" height="18" viewBox="9 940 23 18"><path d="M11.4 942 H28.6 V950 H11.4 Z" fill="#222"/><circle cx="21.6" cy="949.6" r="3.8" fill="#f7f8fa" stroke="#222" stroke-width="1.5"/><path d="M24.4 952.6 L28.4 956.6" stroke="#222" stroke-width="2"/></svg>
<section id="features"></section>
<div id="fl">
<span class="t" style="left:44.4px;top:85.7px;font-size:14px;color:#333;transform:scaleX(0.934);">Features (15)</span>
<svg class="ic" style="left:175px;top:85px" width="21" height="18" viewBox="175 85 21 18"><path d="M176.6 100.4 V87.6 H182.6 L184.2 89.6 H193.4 V100.4 Z" fill="#fff" stroke="#8c8c8c" stroke-width="1" stroke-dasharray="30 3 2 2 2 2 2 2 60"/><path d="M177.4 96 H184.6 M181 92.4 V99.6" stroke="#5a8ad8" stroke-width="1.7"/></svg>
<svg class="ic" style="left:205px;top:84px" width="20" height="20" viewBox="205 84 20 20"><circle cx="215" cy="94.6" r="6.8" fill="none" stroke="#1c1c1c" stroke-width="1.6"/><path d="M212.6 85.6 H217.4 M215 85.6 V87.8 M220.6 88 L222 89.4" stroke="#1c1c1c" stroke-width="1.5"/><path d="M215 94.6 L218 97.8" stroke="#1c1c1c" stroke-width="1.2"/></svg>
<svg class="ic" style="left:49px;top:116px" width="19" height="17" viewBox="49 116 19 17"><path d="M51.4 118 H65.8 L60.2 124.6 V131 L57 129 V124.6 Z" fill="none" stroke="#222" stroke-width="1.2" stroke-linejoin="round"/></svg>
<div id="filter"></div>
<span class="t" style="left:84.8px;top:116.8px;font-size:14px;color:#9a9a9a;font-style:italic;transform:scaleX(0.910);">Filter by name or type</span>
<div class="row" style="top:426.1px;height:23.6px;background:#edf1f5;border-bottom:1.2px solid #86c6ee"></div>
<div class="row" style="top:452.3px;height:23.7px;background:#b3dcf3"></div>
<div class="guide" style="left:49px;top:165px;height:103px"></div>
<div class="gtick" style="left:45px;top:268px;width:9px"></div>
<div class="guide" style="left:49px;top:347px;height:77px"></div>
<div class="gtick" style="left:45px;top:424px;width:9px"></div>
<div class="guide" style="left:49px;top:452px;height:151px"></div>
<div class="gtick" style="left:45px;top:603px;width:9px"></div>
<div class="gtick" style="left:40px;top:642.8px;width:200px;background:#cfcfcf"></div>
<svg class="ic" style="left:43px;top:145.8px" width="14" height="12" viewBox="43 145.8 14 12"><polyline points="44.6,149.60000000000002 50,154.8 55.4,149.60000000000002" fill="none" stroke="#777" stroke-width="2"/></svg>
<span class="t" style="left:63.6px;top:144.1px;font-size:14px;color:#444;transform:scaleX(0.949);">Default geometry</span>
<svg class="ic" style="left:63px;top:167px" width="20" height="20" viewBox="63 167 20 20"><g transform="translate(0,177)"><circle cx="72.3" cy="0.4" r="3.3" fill="#fff" stroke="#444" stroke-width="1"/><circle cx="72.3" cy="0.4" r="1.4" fill="#444"/></g></svg>
<span class="t" style="left:85.4px;top:170.1px;font-size:14px;color:#444;transform:scaleX(0.908);">Origin</span>
<svg class="ic" style="left:63px;top:193px" width="20" height="20" viewBox="63 193 20 20"><g transform="translate(0,203)"><path d="M66 -6.6 L79.6 -4.6 V7.4 L66 5.4 Z" fill="#dcdcdc" stroke="#666" stroke-width="1.1" stroke-linejoin="round"/><path d="M72.4 -5.4 V1.2 H79.6" fill="none" stroke="#666" stroke-width="1.1"/></g></svg>
<span class="t" style="left:85.4px;top:196.1px;font-size:14px;color:#444;transform:scaleX(0.952);">Top</span>
<svg class="ic" style="left:63px;top:219px" width="20" height="20" viewBox="63 219 20 20"><g transform="translate(0,229)"><path d="M66 -6.6 L79.6 -4.6 V7.4 L66 5.4 Z" fill="#dcdcdc" stroke="#666" stroke-width="1.1" stroke-linejoin="round"/><path d="M72.4 -5.4 V1.2 H79.6" fill="none" stroke="#666" stroke-width="1.1"/></g></svg>
<span class="t" style="left:85.4px;top:222.1px;font-size:14px;color:#444;transform:scaleX(0.949);">Front</span>
<svg class="ic" style="left:63px;top:245px" width="20" height="20" viewBox="63 245 20 20"><g transform="translate(0,255)"><path d="M66 -6.6 L79.6 -4.6 V7.4 L66 5.4 Z" fill="#dcdcdc" stroke="#666" stroke-width="1.1" stroke-linejoin="round"/><path d="M72.4 -5.4 V1.2 H79.6" fill="none" stroke="#666" stroke-width="1.1"/></g></svg>
<span class="t" style="left:85.4px;top:248.1px;font-size:14px;color:#444;transform:scaleX(0.924);">Right</span>
<svg class="ic" style="left:44px;top:274px" width="12" height="15" viewBox="44 274 12 15"><polyline points="47.2,276.2 52.6,281.8 47.2,287.4" fill="none" stroke="#777" stroke-width="2"/></svg>
<svg class="ic" style="left:63px;top:271px" width="20" height="20" viewBox="63 271 20 20"><g transform="translate(0,281)"><path d="M73.5 -7 L80 -3.6 V3.8 L73.5 7.2 L67 3.8 V-3.6 Z" fill="#f0f0f0" stroke="#555" stroke-width="1.1" stroke-linejoin="round"/><path d="M67 -3.6 L73.5 -0.2 L80 -3.6 M73.5 -0.2 V7.2" fill="none" stroke="#555" stroke-width="1"/><path d="M73.5 -0.2 L80 -3.6 V3.8 L73.5 7.2 Z" fill="#d8d8d8" stroke="none"/><path d="M73.5 -0.2 L80 -3.6 M73.5 -0.2 V7.2" fill="none" stroke="#555" stroke-width="1"/></g></svg>
<span class="t" style="left:86.2px;top:274.1px;font-size:14px;color:#444;transform:scaleX(0.893);">Origin Cube 1</span>
<svg class="ic" style="left:195px;top:271px" width="10" height="20" viewBox="195 271 10 20"><path d="M200 272 V290.4" stroke="#1c1c1c" stroke-width="2.1" stroke-dasharray="2 1.8"/><circle cx="200" cy="281.1" r="3" fill="#1c1c1c"/></svg>
<svg class="ic" style="left:44px;top:300px" width="12" height="15" viewBox="44 300 12 15"><polyline points="47.2,302.2 52.6,307.8 47.2,313.4" fill="none" stroke="#777" stroke-width="2"/></svg>
<svg class="ic" style="left:63px;top:297px" width="20" height="20" viewBox="63 297 20 20"><g transform="translate(0,307)"><path d="M66.4 -1 H70 M66.4 -1 V4.4 L69.4 7.2 H80.4 V-3.6 L77.2 -6.8 H70.4 V-4" fill="none" stroke="#444" stroke-width="1.1" stroke-linejoin="round"/><path d="M66.4 -1 L69.4 1.8 H76 V7.2 M76 1.8 L80.4 -2" fill="none" stroke="#444" stroke-width="1"/><path d="M69.6 -6 L74 -1.6 M74 -5 V-1.6 H70.6" fill="none" stroke="#222" stroke-width="1.3"/></g></svg>
<span class="t" style="left:86.2px;top:300.1px;font-size:14px;color:#444;transform:scaleX(0.930);">Layout Sketches</span>
<svg class="ic" style="left:43px;top:327.8px" width="14" height="12" viewBox="43 327.8 14 12"><polyline points="44.6,331.6 50,336.8 55.4,331.6" fill="none" stroke="#777" stroke-width="2"/></svg>
<span class="t" style="left:63.6px;top:326.1px;font-size:14px;color:#444;transform:scaleX(0.899);">Tubes (3)</span>
<svg class="ic" style="left:63px;top:349px" width="20" height="20" viewBox="63 349 20 20"><g transform="translate(0,359)"><path d="M65.6 -6.8 H76.4 L80 -4 V7.4 H69 L65.6 4.4 Z" fill="#c9c9c9" stroke="#8a8a8a" stroke-width="1" stroke-linejoin="round"/><path d="M68.6 -3.6 H80 V7.4 H68.6 Z" fill="#a4a4a4" stroke="#808080" stroke-width="0.9"/><path d="M74.3 -3.6 V7.4 M68.6 1.9 H80" stroke="#8a8a8a" stroke-width="0.9"/><path d="M68.6 -3.6 H74.3 V1.9 H68.6 Z" fill="#bdbdbd"/></g></svg>
<span class="t" style="left:85.6px;top:352.1px;font-size:14px;color:#444;transform:scaleX(0.911);">Extrude Individ...</span>
<svg class="ic" style="left:195px;top:349px" width="10" height="20" viewBox="195 349 10 20"><path d="M200 350 V368.4" stroke="#1c1c1c" stroke-width="2.1" stroke-dasharray="2 1.8"/><circle cx="200" cy="359.1" r="3" fill="#1c1c1c"/></svg>
<svg class="ic" style="left:63px;top:375px" width="20" height="20" viewBox="63 375 20 20"><g transform="translate(0,385)"><path d="M64.8 -7.4 L72 -7 L80.4 -3.4 V7.6 L73 7 L64.8 3.4 Z" fill="#9a9a9a" stroke="#3c3c3c" stroke-width="1.2" stroke-linejoin="round"/><path d="M64.8 -7.4 L73 -3.8 V7" fill="none" stroke="#3c3c3c" stroke-width="1.1"/><path d="M65.8 -5.8 L72 -3 V5.4 L65.8 2.6 Z" fill="#ececec"/><path d="M74.6 -2 L79 -1.2 V5.8 L74.6 5.2 Z" fill="#d0d0d0"/><path d="M74.6 -2 L79 -1.2 L76 2.4 Z" fill="#8a8a8a"/><circle cx="67.6" cy="-3" r="1" fill="#555"/><circle cx="70.4" cy="-1.6" r="1" fill="#555"/><circle cx="67.6" cy="0.8" r="1" fill="#555"/><circle cx="70.4" cy="2.4" r="1" fill="#555"/></g></svg>
<span class="t" style="left:85.6px;top:378.1px;font-size:14px;color:#444;transform:scaleX(0.917);">Tube Converter 1</span>
<svg class="ic" style="left:195px;top:375px" width="10" height="20" viewBox="195 375 10 20"><path d="M200 376 V394.4" stroke="#1c1c1c" stroke-width="2.1" stroke-dasharray="2 1.8"/><circle cx="200" cy="385.1" r="3" fill="#1c1c1c"/></svg>
<svg class="ic" style="left:63px;top:401px" width="20" height="20" viewBox="63 401 20 20"><g transform="translate(0,411)"><path d="M64.8 -7.4 L72 -7 L80.4 -3.4 V7.6 L73 7 L64.8 3.4 Z" fill="#9a9a9a" stroke="#3c3c3c" stroke-width="1.2" stroke-linejoin="round"/><path d="M64.8 -7.4 L73 -3.8 V7" fill="none" stroke="#3c3c3c" stroke-width="1.1"/><path d="M65.8 -5.8 L72 -3 V5.4 L65.8 2.6 Z" fill="#ececec"/><path d="M74.6 -2 L79 -1.2 V5.8 L74.6 5.2 Z" fill="#d0d0d0"/><path d="M74.6 -2 L79 -1.2 L76 2.4 Z" fill="#8a8a8a"/><circle cx="67.6" cy="-3" r="1" fill="#555"/><circle cx="70.4" cy="-1.6" r="1" fill="#555"/><circle cx="67.6" cy="0.8" r="1" fill="#555"/><circle cx="70.4" cy="2.4" r="1" fill="#555"/></g></svg>
<span class="t" style="left:85.6px;top:404.1px;font-size:14px;color:#444;transform:scaleX(0.922);">Tube Converter 2</span>
<svg class="ic" style="left:195px;top:401px" width="10" height="20" viewBox="195 401 10 20"><path d="M200 402 V420.4" stroke="#1c1c1c" stroke-width="2.1" stroke-dasharray="2 1.8"/><circle cx="200" cy="411.1" r="3" fill="#1c1c1c"/></svg>
<svg class="ic" style="left:43px;top:431.8px" width="14" height="12" viewBox="43 431.8 14 12"><polyline points="44.6,435.6 50,440.8 55.4,435.6" fill="none" stroke="#777" stroke-width="2"/></svg>
<span class="t" style="left:63.3px;top:430.1px;font-size:14px;color:#444;transform:scaleX(0.932);">Bellypan (5)</span>
<svg class="ic" style="left:63px;top:453px" width="20" height="20" viewBox="63 453 20 20"><g transform="translate(0,463)"><path d="M68 4.6 L68.8 1.4 L77 -6.8 L79.6 -4.2 L71.4 4 Z" fill="#fff" stroke="#2a2a2a" stroke-width="1" stroke-linejoin="round"/><path d="M68 4.6 L69.6 4.2 L68.4 3 Z" fill="#2a2a2a"/><path d="M75.4 -5.2 L78 -2.6" stroke="#2a2a2a" stroke-width="0.9"/><path d="M65 7.2 H80" stroke="#3a6fd0" stroke-width="1.1"/></g></svg>
<span class="t" style="left:85.6px;top:456.1px;font-size:14px;color:#2a2a2a;font-weight:bold;transform:scaleX(0.925);">Bellypan</span>
<svg class="ic" style="left:63px;top:505px" width="20" height="20" viewBox="63 505 20 20"><g transform="translate(0,515)"><path d="M65.6 -6.8 H77 L80 -4 V7.4 H68.6 L65.6 4.4 Z" fill="#fff" stroke="#a8a8a8" stroke-width="1.1" stroke-linejoin="round"/><path d="M65.6 -6.8 L68.6 -4 H80 M68.6 -4 V7.4" fill="none" stroke="#b0b0b0" stroke-width="0.9"/><path d="M71 0.6 L72.8 -1.4 H80 V7.4 H71 Z" fill="#bcbcbc" stroke="#a0a0a0" stroke-width="0.9"/><path d="M71 0.6 H78.2 V7.4" fill="none" stroke="#a8a8a8" stroke-width="0.8"/></g></svg>
<span class="t" style="left:86.2px;top:508.1px;font-size:14px;color:#a9a9a9;font-style:italic;transform:scaleX(0.913);">Extrude 1</span>
<svg class="ic" style="left:63px;top:531px" width="20" height="20" viewBox="63 531 20 20"><g transform="translate(0,541)"><path d="M73 -7 L80 -3.8 V3.8 L73 7.4 L66 3.8 V-3.8 Z" fill="#cfcfcf" stroke="#b0b0b0" stroke-width="1" stroke-linejoin="round"/><path d="M66 -3.8 L73 -0.4 L80 -3.8 M73 -0.4 V7.4" fill="none" stroke="#b4b4b4" stroke-width="0.9"/><ellipse cx="73" cy="-3.6" rx="3.4" ry="1.7" fill="#e4e4e4" stroke="#b4b4b4" stroke-width="0.7"/></g></svg>
<span class="t" style="left:86.0px;top:534.1px;font-size:14px;color:#a9a9a9;font-style:italic;transform:scaleX(0.942);">Fillet All Edges 1</span>
<svg class="ic" style="left:195px;top:531px" width="10" height="20" viewBox="195 531 10 20"><path d="M200 532 V550.4" stroke="#1c1c1c" stroke-width="2.1" stroke-dasharray="2 1.8"/><circle cx="200" cy="541.1" r="3" fill="#1c1c1c"/></svg>
<svg class="ic" style="left:63px;top:557px" width="20" height="20" viewBox="63 557 20 20"><g transform="translate(0,567)"><path d="M68 4.6 L68.8 1.4 L77 -6.8 L79.6 -4.2 L71.4 4 Z" fill="#fff" stroke="#9a9a9a" stroke-width="1" stroke-linejoin="round"/><path d="M68 4.6 L69.6 4.2 L68.4 3 Z" fill="#9a9a9a"/><path d="M75.4 -5.2 L78 -2.6" stroke="#9a9a9a" stroke-width="0.9"/><path d="M65 7.2 H80" stroke="#8fb0e0" stroke-width="1.1"/></g></svg>
<span class="t" style="left:86.0px;top:560.1px;font-size:14px;color:#a9a9a9;font-style:italic;transform:scaleX(0.936);">Bellypan Holes</span>
<svg class="ic" style="left:63px;top:583px" width="20" height="20" viewBox="63 583 20 20"><g transform="translate(0,593)"><path d="M65.6 -6.8 H77 L80 -4 V7.4 H68.6 L65.6 4.4 Z" fill="#fff" stroke="#a8a8a8" stroke-width="1.1" stroke-linejoin="round"/><path d="M65.6 -6.8 L68.6 -4 H80 M68.6 -4 V7.4" fill="none" stroke="#b0b0b0" stroke-width="0.9"/><path d="M71 0.6 L72.8 -1.4 H80 V7.4 H71 Z" fill="#bcbcbc" stroke="#a0a0a0" stroke-width="0.9"/><path d="M71 0.6 H78.2 V7.4" fill="none" stroke="#a8a8a8" stroke-width="0.8"/></g></svg>
<span class="t" style="left:86.0px;top:586.1px;font-size:14px;color:#a9a9a9;font-style:italic;transform:scaleX(0.933);">Extrude 2</span>
<svg class="ic" style="left:44px;top:609px" width="20" height="20" viewBox="44 609 20 20"><g transform="translate(0,619)"><path d="M47.4 -6.6 H57.6 C60.4 -6.6 61.8 -4 60.2 -1.8 L53.6 6 C52.4 7.4 50.6 7.6 49.2 6.6 L46.8 4.8 C46 4.2 45.6 3.4 45.6 2.4 V-4.8 C45.6 -5.8 46.4 -6.6 47.4 -6.6 Z" fill="#f4f4f4" stroke="#8f8f8f" stroke-width="1.3"/><circle cx="49" cy="-3" r="1.5" fill="#fff" stroke="#8f8f8f" stroke-width="0.9"/><circle cx="56.8" cy="-3" r="1.5" fill="#fff" stroke="#8f8f8f" stroke-width="0.9"/><circle cx="50.4" cy="3.2" r="1.5" fill="#fff" stroke="#8f8f8f" stroke-width="0.9"/></g></svg>
<span class="t" style="left:67.1px;top:612.1px;font-size:14px;color:#a9a9a9;font-style:italic;transform:scaleX(0.878);">Gusset 1</span>
<svg class="ic" style="left:195px;top:609px" width="10" height="20" viewBox="195 609 10 20"><path d="M200 610 V628.4" stroke="#1c1c1c" stroke-width="2.1" stroke-dasharray="2 1.8"/><circle cx="200" cy="619.1" r="3" fill="#1c1c1c"/></svg>
<svg class="ic" style="left:43px;top:651.8px" width="14" height="12" viewBox="43 651.8 14 12"><polyline points="44.6,655.5999999999999 50,660.8 55.4,655.5999999999999" fill="none" stroke="#777" stroke-width="2"/></svg>
<span class="t" style="left:63.3px;top:650.1px;font-size:14px;color:#444;transform:scaleX(0.926);">Parts (6)</span>
<svg class="ic" style="left:63px;top:673px" width="20" height="20" viewBox="63 673 20 20"><g transform="translate(0,683)"><path d="M72 -6.4 H76 L78.6 -4.2 V6.6 H68.6 L65.8 4.2 V-0.2 H72 Z" fill="#fff" stroke="#4a4a4a" stroke-width="1.1" stroke-linejoin="round"/><path d="M65.8 -0.2 L68.6 2.2 H74.6 V-4.2 L72 -6.4 M74.6 -4.2 H78.6 M74.6 2.2 V6.6 M68.6 2.2 V6.6" fill="none" stroke="#4a4a4a" stroke-width="0.9"/></g></svg>
<span class="t" style="left:85.4px;top:676.1px;font-size:14px;color:#444;transform:scaleX(0.897);">Origin Cube</span>
<svg class="ic" style="left:63px;top:699px" width="20" height="20" viewBox="63 699 20 20"><g transform="translate(0,709)"><path d="M72 -6.4 H76 L78.6 -4.2 V6.6 H68.6 L65.8 4.2 V-0.2 H72 Z" fill="#fff" stroke="#4a4a4a" stroke-width="1.1" stroke-linejoin="round"/><path d="M65.8 -0.2 L68.6 2.2 H74.6 V-4.2 L72 -6.4 M74.6 -4.2 H78.6 M74.6 2.2 V6.6 M68.6 2.2 V6.6" fill="none" stroke="#4a4a4a" stroke-width="0.9"/></g></svg>
<span class="t" style="left:85.4px;top:702.1px;font-size:14px;color:#444;transform:scaleX(0.920);">Tube 2&quot;x1&quot;x17.5&quot;</span>
<svg class="ic" style="left:63px;top:725px" width="20" height="20" viewBox="63 725 20 20"><g transform="translate(0,735)"><path d="M72 -6.4 H76 L78.6 -4.2 V6.6 H68.6 L65.8 4.2 V-0.2 H72 Z" fill="#fff" stroke="#4a4a4a" stroke-width="1.1" stroke-linejoin="round"/><path d="M65.8 -0.2 L68.6 2.2 H74.6 V-4.2 L72 -6.4 M74.6 -4.2 H78.6 M74.6 2.2 V6.6 M68.6 2.2 V6.6" fill="none" stroke="#4a4a4a" stroke-width="0.9"/></g></svg>
<span class="t" style="left:85.4px;top:728.1px;font-size:14px;color:#444;transform:scaleX(0.920);">Tube 2&quot;x1&quot;x17.5&quot;</span>
<svg class="ic" style="left:63px;top:751px" width="20" height="20" viewBox="63 751 20 20"><g transform="translate(0,761)"><path d="M72 -6.4 H76 L78.6 -4.2 V6.6 H68.6 L65.8 4.2 V-0.2 H72 Z" fill="#fff" stroke="#4a4a4a" stroke-width="1.1" stroke-linejoin="round"/><path d="M65.8 -0.2 L68.6 2.2 H74.6 V-4.2 L72 -6.4 M74.6 -4.2 H78.6 M74.6 2.2 V6.6 M68.6 2.2 V6.6" fill="none" stroke="#4a4a4a" stroke-width="0.9"/></g></svg>
<span class="t" style="left:85.4px;top:754.1px;font-size:14px;color:#444;transform:scaleX(0.946);">Tube 2&quot;x2&quot;x24&quot;</span>
<svg class="ic" style="left:63px;top:777px" width="20" height="20" viewBox="63 777 20 20"><g transform="translate(0,787)"><path d="M72 -6.4 H76 L78.6 -4.2 V6.6 H68.6 L65.8 4.2 V-0.2 H72 Z" fill="#fff" stroke="#4a4a4a" stroke-width="1.1" stroke-linejoin="round"/><path d="M65.8 -0.2 L68.6 2.2 H74.6 V-4.2 L72 -6.4 M74.6 -4.2 H78.6 M74.6 2.2 V6.6 M68.6 2.2 V6.6" fill="none" stroke="#4a4a4a" stroke-width="0.9"/></g></svg>
<span class="t" style="left:85.4px;top:780.1px;font-size:14px;color:#444;transform:scaleX(0.920);">Tube 2&quot;x1&quot;x17.5&quot;</span>
<svg class="ic" style="left:63px;top:803px" width="20" height="20" viewBox="63 803 20 20"><g transform="translate(0,813)"><path d="M72 -6.4 H76 L78.6 -4.2 V6.6 H68.6 L65.8 4.2 V-0.2 H72 Z" fill="#fff" stroke="#4a4a4a" stroke-width="1.1" stroke-linejoin="round"/><path d="M65.8 -0.2 L68.6 2.2 H74.6 V-4.2 L72 -6.4 M74.6 -4.2 H78.6 M74.6 2.2 V6.6 M68.6 2.2 V6.6" fill="none" stroke="#4a4a4a" stroke-width="0.9"/></g></svg>
<span class="t" style="left:85.4px;top:806.1px;font-size:14px;color:#444;transform:scaleX(0.920);">Tube 2&quot;x1&quot;x17.5&quot;</span>
<div id="rollbar"></div>
<div id="ftab"></div>
<svg class="ic" style="left:252px;top:487px" width="20" height="20" viewBox="252 487 20 20"><path d="M257.6 490.4 H270.2 M257.6 495.3 H270.2 M257.6 500.2 H270.2 M257.6 505 H270.2" stroke="#222" stroke-width="1"/><path d="M254.8 493 V506" stroke="#222" stroke-width="1.5"/><path d="M252.6 488.6 L254.8 491 L257 488.6" fill="none" stroke="#222" stroke-width="1.2"/></svg>
</div>
<section id="dialog"><div class="hd"></div></section>
<div id="dlg">
<span class="t" style="left:268.5px;top:86.2px;font-size:14px;color:#333;transform:scaleX(0.959);">Bellypan</span>
<div id="ok"></div>
<svg class="ic" style="left:430px;top:85px" width="20" height="17" viewBox="430 85 20 17"><path d="M433 93.6 L437.8 98.4 L447 88.6" fill="none" stroke="#fff" stroke-width="2.9"/></svg>
<svg class="ic" style="left:460px;top:86px" width="16" height="15" viewBox="460 86 16 15"><path d="M463 88.4 L473.4 98.4 M473.4 88.4 L463 98.4" stroke="#c4262e" stroke-width="3"/></svg>
<div id="plane"></div>
<span class="t" style="left:271.0px;top:119.2px;font-size:10.5px;color:#66788a;transform:scaleX(0.955);">Sketch plane</span>
<span class="t" style="left:272.4px;top:137.2px;font-size:14px;color:#3a3a3a;transform:scaleX(0.923);">Face of DT Top Layout</span>
<svg class="ic" style="left:432px;top:139px" width="11" height="11" viewBox="432 139 11 11"><path d="M433.6 141 L440.6 148 M440.6 141 L433.6 148" stroke="#cfcfcf" stroke-width="1"/></svg>
<svg class="ic" style="left:456px;top:115px" width="21" height="21" viewBox="456 115 21 21"><circle cx="466.4" cy="125.3" r="8.4" fill="#fff" stroke="#2a2a2a" stroke-width="1.1"/><path d="M466.4 125.3 H473.6 A7.2 7.2 0 0 0 466.4 118.1 Z" fill="#e6e6e6"/><circle cx="466.4" cy="125.3" r="6.9" fill="none" stroke="#2a2a2a" stroke-width="1"/><path d="M466.4 118.6 V125.3 H473.2" fill="none" stroke="#2a2a2a" stroke-width="1.2"/></svg>
<div class="cb" style="top:170px"></div>
<span class="t" style="left:282.3px;top:168.9px;font-size:14px;color:#767676;transform:scaleX(0.953);">Disable imprinting</span>
<div class="cb" style="top:197px"></div>
<span class="t" style="left:282.3px;top:196.3px;font-size:14px;color:#767676;transform:scaleX(0.948);">Show constraints</span>
<div class="cb" style="top:225px"></div>
<span class="t" style="left:282.3px;top:223.6px;font-size:14px;color:#767676;transform:scaleX(0.927);">Show expressions</span>
<div class="cb on" style="top:252px"></div>
<svg class="ic" style="left:266px;top:252px" width="12" height="12" viewBox="266 252 12 12"><path d="M268.6 258.3 L270.9 260.6 L275.2 255.5" fill="none" stroke="#fff" stroke-width="1.7"/></svg>
<span class="t" style="left:282.3px;top:251.0px;font-size:14px;color:#4a4a4a;transform:scaleX(0.927);">Show overdefined</span>
<svg class="ic" style="left:464px;top:279px" width="13" height="13" viewBox="464 279 13 13"><circle cx="470.5" cy="285.2" r="5.6" fill="#c9c9c9"/><text x="467.7" y="288.6" font-family="Liberation Sans, sans-serif" font-weight="bold" font-size="9.5" fill="#fff">?</text></svg>
</div>
<svg class="ic" style="left:1750px;top:86px" width="160" height="160" viewBox="1750 86 160 160"><path d="M1829.9 91.4 L1837.4 100.4 H1822.4 Z" fill="#dfe6ee"/><path d="M1829.9 240.4 L1837.4 231.4 H1822.4 Z" fill="#dfe6ee"/><path d="M1755.6 166 L1764.6 158.8 V173.2 Z" fill="#dfe6ee"/><path d="M1904.4 166 L1895.4 158.8 V173.2 Z" fill="#dfe6ee"/><path d="M1809 101.4 C1797 105.6 1788 112 1781.6 119.6" fill="none" stroke="#dfe6ee" stroke-width="4.6"/><path d="M1776.4 124.8 L1777.6 112.6 L1787.4 122.8 Z" fill="#dfe6ee"/><path d="M1850.8 101.4 C1862.8 105.6 1871.8 112 1878.2 119.6" fill="none" stroke="#dfe6ee" stroke-width="4.6"/><path d="M1883.4 124.8 L1882.2 112.6 L1872.4 122.8 Z" fill="#dfe6ee"/><rect x="1802.2" y="137.9" width="56.1" height="56.1" fill="#dfe6ee"/><circle cx="1802.2" cy="137.9" r="10" fill="#fff"/><circle cx="1858.3" cy="137.9" r="10" fill="#fff"/><circle cx="1802.2" cy="194" r="10" fill="#fff"/><circle cx="1858.3" cy="194" r="10" fill="#fff"/><rect x="1807.9" y="143.9" width="44.4" height="44.5" rx="9" fill="#fff"/><path d="M1799.4 135.3 H1858.3" stroke="#e02626" stroke-width="1.2"/><path d="M1799.4 135.3 V194" stroke="#25a62a" stroke-width="1.2"/></svg>
<span class="t" style="left:1810.5px;top:160.3px;font-size:13px;color:#2e2e2e;transform:scaleX(0.935);">Bottom</span>
<span class="t" style="left:1864.6px;top:129.7px;font-size:12.5px;color:#e02626;transform:scaleX(0.864);-webkit-text-stroke:0.3px #e02626;">X</span>
<span class="t" style="left:1795.4px;top:199.0px;font-size:12.5px;color:#25a62a;transform:scaleX(0.840);-webkit-text-stroke:0.3px #25a62a;">Y</span>
<svg class="ic" style="left:1864px;top:221px" width="22" height="22" viewBox="1864 221 22 22"><path d="M1875 223 L1883.6 226 V236.6 L1875 240.4 L1866.4 236.6 V226 Z" fill="#f4f4f4" stroke="#444" stroke-width="1" stroke-linejoin="round"/><path d="M1866.4 226 L1875 229.4 V240.4 L1866.4 236.6 Z" fill="#8e8e8e"/><path d="M1875 229.4 L1883.6 226 V236.6 L1875 240.4 Z" fill="#d2d2d2"/><path d="M1866.4 226 L1875 229.4 L1883.6 226 M1875 229.4 V240.4" fill="none" stroke="#444" stroke-width="0.9"/></svg>
<svg class="ic" style="left:1891px;top:228px" width="10" height="8" viewBox="1891 228 10 8"><path d="M1892.2 229.8 H1899.8 L1896 233.8 Z" fill="#2a2a2a"/></svg>
<div class="rp" style="top:391.2px;height:132.6px"><i style="top:32.4px"></i><i style="top:65.2px"></i><i style="top:98.2px"></i></div>
<div class="rp" style="top:534.4px;height:66.6px"><i style="top:32.2px"></i></div>
<svg class="ic" style="left:1894px;top:397px" width="23" height="23" viewBox="1894 397 23 23"><path d="M1905 399.4 L1910.4 401.8 L1914.6 409 V411 H1897.6 Z" fill="#9c9c9c"/><path d="M1905 399.4 L1908 410 M1901.4 404.6 L1898 410.6" stroke="#bdbdbd" stroke-width="1"/><rect x="1895.8" y="411.4" width="19.4" height="6.4" rx="3" fill="#e8e8e8" stroke="#8a8a8a" stroke-width="1"/><path d="M1902.4 411.4 V417.8 M1908.6 411.4 V417.8" stroke="#8a8a8a" stroke-width="0.9"/><circle cx="1899" cy="414.6" r="1" fill="#555"/></svg>
<svg class="ic" style="left:1894px;top:430px" width="23" height="23" viewBox="1894 430 23 23"><path d="M1906.6 436 L1914.4 439.6 V447.4 L1906.6 451.2 L1899 447.4 V439.6 Z" fill="#fff" stroke="#2a2a2a" stroke-width="1.1" stroke-linejoin="round"/><path d="M1899 439.6 L1906.6 443.2 L1914.4 439.6 M1906.6 443.2 V451.2" fill="none" stroke="#2a2a2a" stroke-width="1"/><rect x="1895.2" y="432" width="9.6" height="7.6" fill="#fff" stroke="#1a4fb4" stroke-width="1"/><path d="M1898.4 432 V439.6 M1901.6 432 V439.6 M1895.2 434.6 H1904.8 M1895.2 437.1 H1904.8" stroke="#1a4fb4" stroke-width="0.9"/></svg>
<svg class="ic" style="left:1894px;top:463px" width="23" height="23" viewBox="1894 463 23 23"><path d="M1907 470.4 L1912.6 472.6 V478 L1907 480.6 L1901.6 478 V472.6 Z" fill="#e4e4e4" stroke="#444" stroke-width="0.9" stroke-linejoin="round"/><path d="M1901.6 472.6 L1907 475 L1912.6 472.6 M1907 475 V480.6" fill="none" stroke="#444" stroke-width="0.8"/><path d="M1899.6 469 C1897.6 469 1898.6 474 1896.8 475.4 C1898.6 476.8 1897.6 481.6 1899.6 481.6 M1912.6 469 C1914.6 469 1913.6 474 1915.4 475.4 C1913.6 476.8 1914.6 481.6 1912.6 481.6" fill="none" stroke="#333" stroke-width="1"/><rect x="1895.2" y="465.2" width="8.8" height="6.6" fill="#fff" stroke="#333" stroke-width="0.9"/><path d="M1898.2 465.2 V471.8 M1901.2 465.2 V471.8 M1895.2 467.4 H1904 M1895.2 469.6 H1904" stroke="#333" stroke-width="0.8"/></svg>
<svg class="ic" style="left:1894px;top:496px" width="23" height="23" viewBox="1894 496 23 23"><rect x="1895.2" y="498.2" width="8.8" height="6.6" fill="#fff" stroke="#222" stroke-width="0.9"/><path d="M1898.2 498.2 V504.8 M1901.2 498.2 V504.8 M1895.2 500.4 H1904 M1895.2 502.6 H1904" stroke="#222" stroke-width="0.8"/><path d="M1898.4 503.6 C1895.4 506.6 1895.4 511.6 1898.4 514.8 M1912.6 501.6 C1915.6 505 1915.6 511 1912.6 514.8" fill="none" stroke="#222" stroke-width="1.5"/><path d="M1901.4 506 C1904 506 1905.2 513 1908.6 513 M1908.6 506 C1905.6 506 1904.6 513 1901.4 513" fill="none" stroke="#222" stroke-width="1.6"/></svg>
<svg class="ic" style="left:1892px;top:538px" width="26" height="26" viewBox="1892 538 26 26"><rect x="1893" y="539" width="24.2" height="24.2" rx="3.4" fill="#cdcdcd"/><path d="M1905.1 551.1 L1898.3 544.3 A9.6 9.6 0 0 1 1911.9 544.3 Z" fill="#58b84e"/><path d="M1905.1 551.1 L1911.9 544.3 A9.6 9.6 0 0 1 1911.9 557.9 Z" fill="#49b1ea"/><path d="M1905.1 551.1 L1911.9 557.9 A9.6 9.6 0 0 1 1898.3 557.9 Z" fill="#f0b440"/><path d="M1905.1 551.1 L1898.3 557.9 A9.6 9.6 0 0 1 1898.3 544.3 Z" fill="#e04848"/></svg>
<svg class="ic" style="left:1892px;top:571px" width="26" height="26" viewBox="1892 571 26 26"><rect x="1893.4" y="571.8" width="23.8" height="23.6" rx="2.4" fill="#c9c9c9"/><rect x="1895" y="573.4" width="20.6" height="20.4" fill="#0a50e4"/><text x="1896.2" y="589.4" font-family="Liberation Serif, serif" font-weight="bold" font-size="14.5" fill="#fff" textLength="18.4" lengthAdjust="spacingAndGlyphs">MK</text></svg>
<svg class="ic" style="left:1820px;top:910px" width="20" height="17" viewBox="1820 910 20 17"><ellipse cx="1832.4" cy="917" rx="5.2" ry="3.6" fill="#fff" stroke="#222" stroke-width="1.2"/><ellipse cx="1832.4" cy="916.6" rx="2.8" ry="1.4" fill="none" stroke="#222" stroke-width="0.9"/><path d="M1827.2 917 V920 M1837.6 917 V922.6 C1837.6 923.6 1836 924.4 1834 924.6" fill="none" stroke="#222" stroke-width="1.2"/><rect x="1822.6" y="919.8" width="12.6" height="4.8" fill="#f2f2f2" stroke="#222" stroke-width="1.2"/><path d="M1825 922.6 V924.4 M1827.4 922.6 V924.4 M1829.8 922.6 V924.4 M1832.2 922.6 V924.4" stroke="#222" stroke-width="0.7"/></svg>
<svg class="ic" style="left:1853px;top:910px" width="24" height="17" viewBox="1853 910 24 17"><path d="M1855.6 925 C1855.6 917 1859.6 913.2 1865.1 913.2 C1870.6 913.2 1874.6 917 1874.6 925 Z" fill="#f4f4f4" stroke="#222" stroke-width="1.3" stroke-linejoin="round"/><path d="M1859.6 922.6 C1859.6 918.6 1862 916.8 1865.1 916.8 C1868.2 916.8 1870.6 918.6 1870.6 922.6 H1867.4 C1867 921 1866.2 920.4 1865.1 920.4 C1864 920.4 1863.2 921 1862.8 922.6 Z" fill="#fff" stroke="#222" stroke-width="1.1" stroke-linejoin="round"/></svg>
<svg class="ic" style="left:1891px;top:910px" width="18" height="17" viewBox="1891 910 18 17"><path d="M1895.4 912.6 H1904.8 M1900.1 912.6 V923.6" stroke="#333" stroke-width="1.4"/><path d="M1895.4 912.6 L1894 921 M1895.4 912.6 L1896.8 921 M1904.8 912.6 L1903.4 921 M1904.8 912.6 L1906.2 921" stroke="#333" stroke-width="0.8"/><path d="M1893 921.4 H1897.8 M1902.4 921.4 H1907.2" stroke="#222" stroke-width="1.8"/><path d="M1893 925 H1907.2" stroke="#222" stroke-width="1.8"/></svg>
<footer id="tabs"></footer>
<div id="tb">
<svg class="ic" style="left:48px;top:938px" width="18" height="18" viewBox="48 938 18 18"><path d="M49 947.2 H64.2 M56.6 939.8 V954.6" stroke="#555" stroke-width="2.5"/></svg>
<div id="home"></div>
<svg class="ic" style="left:108px;top:932px" width="125" height="29" viewBox="108 932 125 29"><path d="M108.6 932.5 H223.4 L231.2 946.2 L223.4 959.9 H108.6 L116.9 946.2 Z" fill="#fff"/></svg>
<svg class="ic" style="left:82px;top:936px" width="20" height="18" viewBox="82 936 20 18"><path d="M83 946.4 L92 937 L95.6 940.8 V938.4 H98 V943.2 L101 946.4 H98.8 V953.6 H94 V948.4 H90 V953.6 H85.2 V946.4 Z" fill="#6a6a6a"/></svg>
<svg class="ic" style="left:124px;top:937px" width="22" height="17" viewBox="124 937 22 17"><path d="M126.4 951.4 V939.2 H132.6 L134.2 941.4 H143.6 V951.4 Z" fill="#fff" stroke="#2a2a2a" stroke-width="1.2" stroke-linejoin="round"/></svg>
<span class="t" style="left:150.4px;top:937.1px;font-size:15.4px;color:#6a6a6a;transform:scaleX(0.914);">Drivetrain</span>
<div id="asm"></div>
<svg class="ic" style="left:245px;top:938px" width="15" height="15" viewBox="245 938 15 15"><circle cx="252.6" cy="945.5" r="6.7" fill="#5b97d9"/><path d="M251.2 941.4 H254 V945.4 H256.4 L252.6 949.8 L248.8 945.4 H251.2 Z" fill="#fff"/></svg>
<svg class="ic" style="left:263px;top:936px" width="20" height="20" viewBox="263 936 20 20"><path d="M264.8 937.8 H277.8 L281.4 941 V954 H268.6 L264.8 950.8 Z" fill="#fff" stroke="#222" stroke-width="1.1" stroke-linejoin="round"/><path d="M264.8 937.8 L268.6 941 H281.4 M268.6 941 V954" fill="none" stroke="#222" stroke-width="0.9"/><path d="M266.6 939.2 H276.6 V949.4 H266.6 Z" fill="#8c8c8c" stroke="#444" stroke-width="0.9"/></svg>
<span class="t" style="left:286.0px;top:938.9px;font-size:15.4px;color:#6a6a6a;transform:scaleX(0.916);">Drivetrain Assembly</span>
<div id="active"></div>
<svg class="ic" style="left:446px;top:936px" width="20" height="20" viewBox="446 936 20 20"><path d="M447.6 942.8 L450.4 941.2 H454.6 V954 H450.4 L447.6 952.4 Z" fill="#fff" stroke="#222" stroke-width="1.1" stroke-linejoin="round"/><path d="M450.4 941.2 V954" stroke="#222" stroke-width="0.9"/><path d="M455.4 939.2 L458.2 937.6 H463.4 V954 H458.2 L455.4 952.4 Z" fill="#fff" stroke="#222" stroke-width="1.1" stroke-linejoin="round"/><path d="M458.2 937.6 V954" stroke="#222" stroke-width="0.9"/></svg>
<span class="t" style="left:468.4px;top:938.9px;font-size:15.4px;color:#4a4a4a;transform:scaleX(0.912);">Drivetrain</span>
</div>
</body></html>
